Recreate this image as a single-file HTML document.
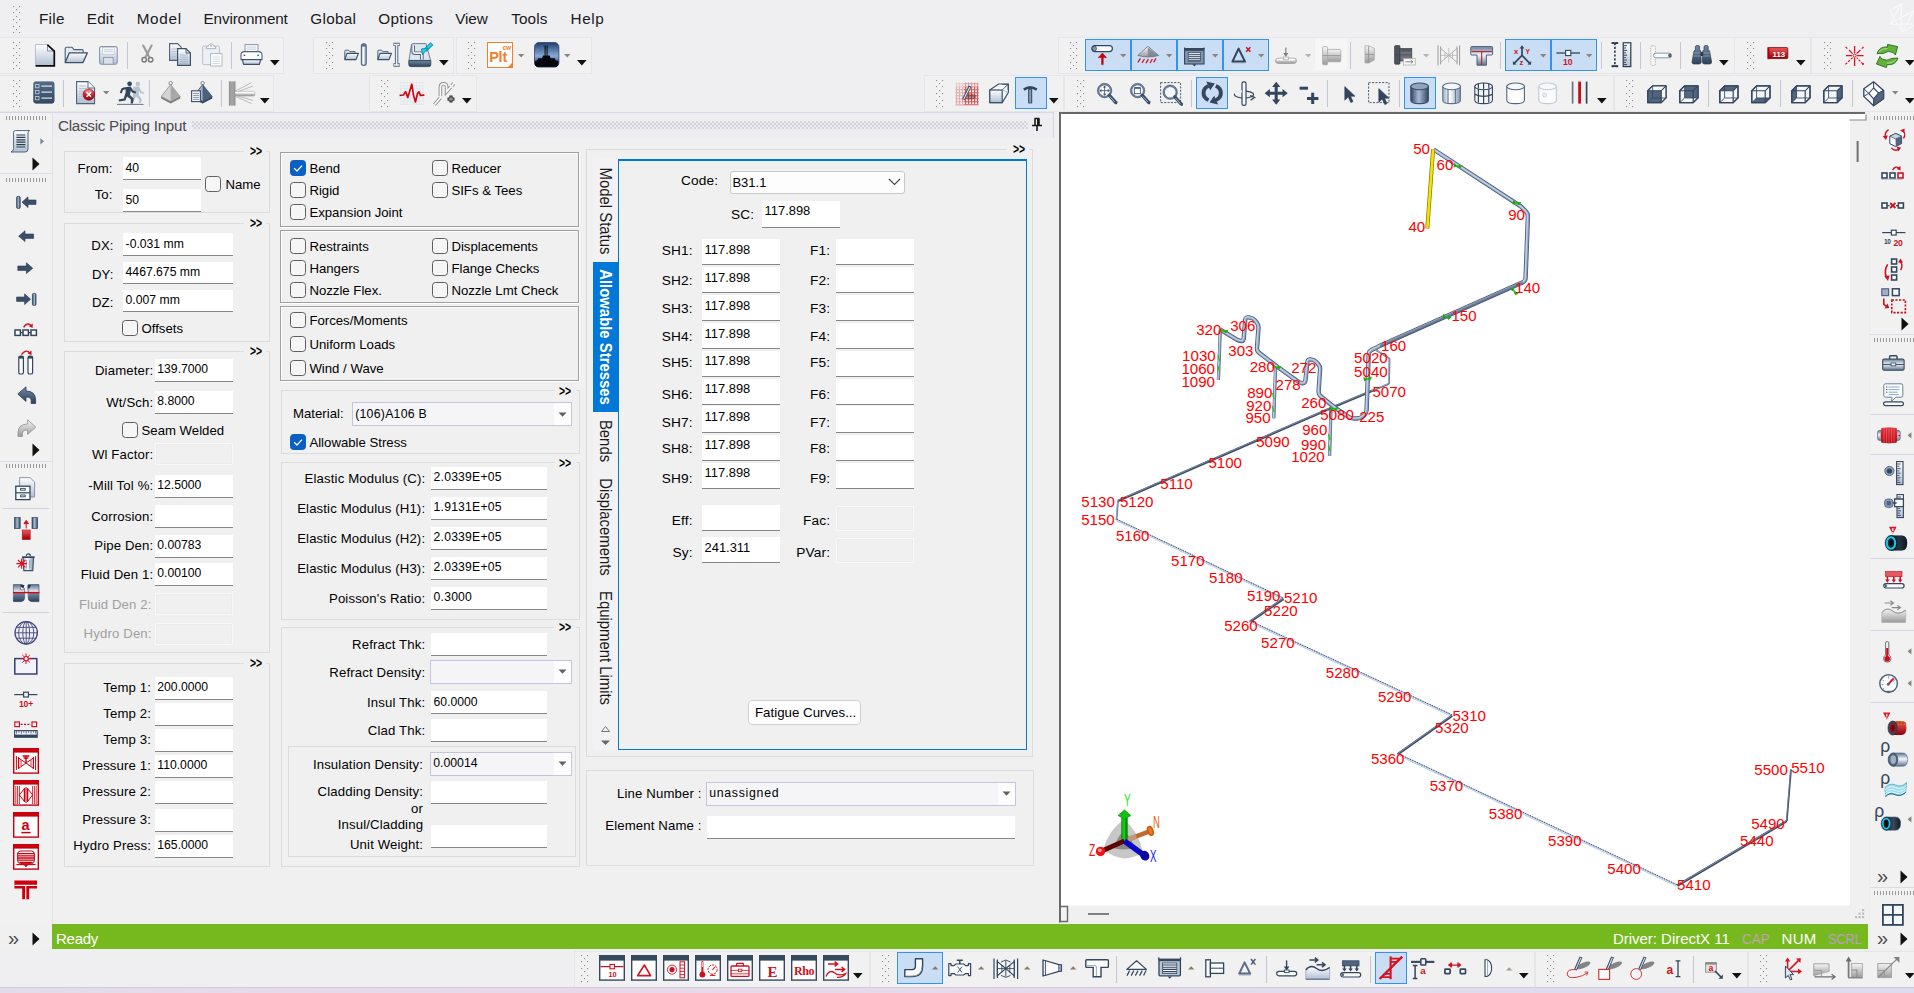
<!DOCTYPE html>
<html lang="en"><head><meta charset="utf-8"><title>Classic Piping Input</title>
<style>
html,body{margin:0;padding:0}
body{width:1914px;height:993px;overflow:hidden;background:#f0f0f0;position:relative;font-family:"Liberation Sans",sans-serif}
div,svg{position:absolute;box-sizing:border-box}
svg{overflow:visible}
.t{white-space:nowrap;line-height:1;font-size:13.2px;color:#000}
.in{background:#fff;border-bottom:1px solid #868686}
.di{background:#f0f0f0;border:1px solid #f8f8f8;box-shadow:inset 0 0 0 1px #ececec}
.co{background:#f5f5f7;border:1px solid #c3c6dc}
.cb{background:#f6f6f6;border:1px solid #5f5f5f;border-radius:3.5px}
.ck{background:#0a5fc2;border-color:#0a5fc2}
.gb{border:1px solid #dcdcdc}
.eb{border:1px solid #a0a0a0;box-shadow:1px 1px 0 #fff, inset 1px 1px 0 #fff}
.hgrip{background:repeating-linear-gradient(90deg,#9a9a9a 0 1px,transparent 1px 3px)}
.dots{background:radial-gradient(circle at 1px 1px,#c6c6ce 0.6px,transparent 0.95px) 0 0/4px 4px,radial-gradient(circle at 1px 1px,#c6c6ce 0.6px,transparent 0.95px) 2px 2px/4px 4px}
</style></head>
<body>
<div style="left:0px;top:0px;width:1914px;height:112px;background:#efeff2"></div>
<div style="left:0px;top:949px;width:1914px;height:38px;background:#efeff2"></div>
<svg style="left:1886px;top:0px" width="28" height="36" viewBox="0 0 28 36"><path d="M3.8 10.6 L15.3 3.8 V31.5 M3.8 10.6 L9.3 20.7 L16.1 31.7 L28 25.4 M3.8 24.1 H27 M3.8 24.1 L9.3 20.7 L28 10.6 M15.3 3.8 L3.8 24.1 M16.1 31.7 L28 10.6" fill="none" stroke="#f9f9fa" stroke-width="1.1" stroke-linejoin="round"/></svg>
<svg style="left:13px;top:6px" width="8" height="27" viewBox="0 0 8 27"><g fill="#8e8e8e"><rect x="0" y="0" width="1.1" height="1.1"/><rect x="6" y="0" width="1.1" height="1.1"/><rect x="3" y="3" width="1.1" height="1.1"/><rect x="0" y="6" width="1.1" height="1.1"/><rect x="6" y="6" width="1.1" height="1.1"/><rect x="3" y="10" width="1.1" height="1.1"/><rect x="0" y="13" width="1.1" height="1.1"/><rect x="6" y="13" width="1.1" height="1.1"/><rect x="3" y="16" width="1.1" height="1.1"/><rect x="0" y="20" width="1.1" height="1.1"/><rect x="6" y="20" width="1.1" height="1.1"/><rect x="3" y="23" width="1.1" height="1.1"/><rect x="0" y="26" width="1.1" height="1.1"/><rect x="6" y="26" width="1.1" height="1.1"/></g></svg>
<div class="t" style="top:11.05px;left:39px;font-size:15.3px;color:#1a1a1a;letter-spacing:0.27px">File</div>
<div class="t" style="top:11.05px;left:86.8px;font-size:15.3px;color:#1a1a1a;letter-spacing:0.17px">Edit</div>
<div class="t" style="top:11.05px;left:136.7px;font-size:15.3px;color:#1a1a1a;letter-spacing:0.67px">Model</div>
<div class="t" style="top:11.05px;left:203.5px;font-size:15.3px;color:#1a1a1a;letter-spacing:-0.15px">Environment</div>
<div class="t" style="top:11.05px;left:310.3px;font-size:15.3px;color:#1a1a1a;letter-spacing:0.3px">Global</div>
<div class="t" style="top:11.05px;left:378.2px;font-size:15.3px;color:#1a1a1a;letter-spacing:0.32px">Options</div>
<div class="t" style="top:11.05px;left:455.2px;font-size:15.3px;color:#1a1a1a;letter-spacing:-0.1px">View</div>
<div class="t" style="top:11.05px;left:511.2px;font-size:15.3px;color:#1a1a1a;letter-spacing:0.1px">Tools</div>
<div class="t" style="top:11.05px;left:570.6px;font-size:15.3px;color:#1a1a1a;letter-spacing:0.6px">Help</div>
<div style="left:-1px;top:36.5px;width:285px;height:37px;background:#f1f1f2;border:1px solid #e5e5ea"></div>
<div style="left:313px;top:36.5px;width:140.5px;height:37px;background:#f1f1f2;border:1px solid #e5e5ea"></div>
<div style="left:455.5px;top:36.5px;width:136px;height:37px;background:#f1f1f2;border:1px solid #e5e5ea"></div>
<div style="left:1057.5px;top:36.5px;width:677px;height:37px;background:#f1f1f2;border:1px solid #e5e5ea"></div>
<div style="left:1734px;top:36.5px;width:77px;height:37px;background:#f1f1f2;border:1px solid #e5e5ea"></div>
<div style="left:1811px;top:36.5px;width:110px;height:37px;background:#f1f1f2;border:1px solid #e5e5ea"></div>
<div style="left:-1px;top:74.5px;width:275px;height:37px;background:#f1f1f2;border:1px solid #e5e5ea"></div>
<div style="left:369px;top:74.5px;width:107.5px;height:37px;background:#f1f1f2;border:1px solid #e5e5ea"></div>
<div style="left:923.5px;top:74.5px;width:140px;height:37px;background:#f1f1f2;border:1px solid #e5e5ea"></div>
<div style="left:1064px;top:74.5px;width:550px;height:37px;background:#f1f1f2;border:1px solid #e5e5ea"></div>
<div style="left:1614px;top:74.5px;width:310px;height:37px;background:#f1f1f2;border:1px solid #e5e5ea"></div>
<svg style="left:13px;top:42px" width="8" height="27" viewBox="0 0 8 27"><g fill="#8e8e8e"><rect x="0" y="0" width="1.1" height="1.1"/><rect x="6" y="0" width="1.1" height="1.1"/><rect x="3" y="3" width="1.1" height="1.1"/><rect x="0" y="6" width="1.1" height="1.1"/><rect x="6" y="6" width="1.1" height="1.1"/><rect x="3" y="10" width="1.1" height="1.1"/><rect x="0" y="13" width="1.1" height="1.1"/><rect x="6" y="13" width="1.1" height="1.1"/><rect x="3" y="16" width="1.1" height="1.1"/><rect x="0" y="20" width="1.1" height="1.1"/><rect x="6" y="20" width="1.1" height="1.1"/><rect x="3" y="23" width="1.1" height="1.1"/><rect x="0" y="26" width="1.1" height="1.1"/><rect x="6" y="26" width="1.1" height="1.1"/></g></svg>
<svg style="left:326px;top:42px" width="8" height="27" viewBox="0 0 8 27"><g fill="#8e8e8e"><rect x="0" y="0" width="1.1" height="1.1"/><rect x="6" y="0" width="1.1" height="1.1"/><rect x="3" y="3" width="1.1" height="1.1"/><rect x="0" y="6" width="1.1" height="1.1"/><rect x="6" y="6" width="1.1" height="1.1"/><rect x="3" y="10" width="1.1" height="1.1"/><rect x="0" y="13" width="1.1" height="1.1"/><rect x="6" y="13" width="1.1" height="1.1"/><rect x="3" y="16" width="1.1" height="1.1"/><rect x="0" y="20" width="1.1" height="1.1"/><rect x="6" y="20" width="1.1" height="1.1"/><rect x="3" y="23" width="1.1" height="1.1"/><rect x="0" y="26" width="1.1" height="1.1"/><rect x="6" y="26" width="1.1" height="1.1"/></g></svg>
<svg style="left:468px;top:42px" width="8" height="27" viewBox="0 0 8 27"><g fill="#8e8e8e"><rect x="0" y="0" width="1.1" height="1.1"/><rect x="6" y="0" width="1.1" height="1.1"/><rect x="3" y="3" width="1.1" height="1.1"/><rect x="0" y="6" width="1.1" height="1.1"/><rect x="6" y="6" width="1.1" height="1.1"/><rect x="3" y="10" width="1.1" height="1.1"/><rect x="0" y="13" width="1.1" height="1.1"/><rect x="6" y="13" width="1.1" height="1.1"/><rect x="3" y="16" width="1.1" height="1.1"/><rect x="0" y="20" width="1.1" height="1.1"/><rect x="6" y="20" width="1.1" height="1.1"/><rect x="3" y="23" width="1.1" height="1.1"/><rect x="0" y="26" width="1.1" height="1.1"/><rect x="6" y="26" width="1.1" height="1.1"/></g></svg>
<svg style="left:1070px;top:42px" width="8" height="27" viewBox="0 0 8 27"><g fill="#8e8e8e"><rect x="0" y="0" width="1.1" height="1.1"/><rect x="6" y="0" width="1.1" height="1.1"/><rect x="3" y="3" width="1.1" height="1.1"/><rect x="0" y="6" width="1.1" height="1.1"/><rect x="6" y="6" width="1.1" height="1.1"/><rect x="3" y="10" width="1.1" height="1.1"/><rect x="0" y="13" width="1.1" height="1.1"/><rect x="6" y="13" width="1.1" height="1.1"/><rect x="3" y="16" width="1.1" height="1.1"/><rect x="0" y="20" width="1.1" height="1.1"/><rect x="6" y="20" width="1.1" height="1.1"/><rect x="3" y="23" width="1.1" height="1.1"/><rect x="0" y="26" width="1.1" height="1.1"/><rect x="6" y="26" width="1.1" height="1.1"/></g></svg>
<svg style="left:1747px;top:42px" width="8" height="27" viewBox="0 0 8 27"><g fill="#8e8e8e"><rect x="0" y="0" width="1.1" height="1.1"/><rect x="6" y="0" width="1.1" height="1.1"/><rect x="3" y="3" width="1.1" height="1.1"/><rect x="0" y="6" width="1.1" height="1.1"/><rect x="6" y="6" width="1.1" height="1.1"/><rect x="3" y="10" width="1.1" height="1.1"/><rect x="0" y="13" width="1.1" height="1.1"/><rect x="6" y="13" width="1.1" height="1.1"/><rect x="3" y="16" width="1.1" height="1.1"/><rect x="0" y="20" width="1.1" height="1.1"/><rect x="6" y="20" width="1.1" height="1.1"/><rect x="3" y="23" width="1.1" height="1.1"/><rect x="0" y="26" width="1.1" height="1.1"/><rect x="6" y="26" width="1.1" height="1.1"/></g></svg>
<svg style="left:1824px;top:42px" width="8" height="27" viewBox="0 0 8 27"><g fill="#8e8e8e"><rect x="0" y="0" width="1.1" height="1.1"/><rect x="6" y="0" width="1.1" height="1.1"/><rect x="3" y="3" width="1.1" height="1.1"/><rect x="0" y="6" width="1.1" height="1.1"/><rect x="6" y="6" width="1.1" height="1.1"/><rect x="3" y="10" width="1.1" height="1.1"/><rect x="0" y="13" width="1.1" height="1.1"/><rect x="6" y="13" width="1.1" height="1.1"/><rect x="3" y="16" width="1.1" height="1.1"/><rect x="0" y="20" width="1.1" height="1.1"/><rect x="6" y="20" width="1.1" height="1.1"/><rect x="3" y="23" width="1.1" height="1.1"/><rect x="0" y="26" width="1.1" height="1.1"/><rect x="6" y="26" width="1.1" height="1.1"/></g></svg>
<svg style="left:13px;top:80px" width="8" height="27" viewBox="0 0 8 27"><g fill="#8e8e8e"><rect x="0" y="0" width="1.1" height="1.1"/><rect x="6" y="0" width="1.1" height="1.1"/><rect x="3" y="3" width="1.1" height="1.1"/><rect x="0" y="6" width="1.1" height="1.1"/><rect x="6" y="6" width="1.1" height="1.1"/><rect x="3" y="10" width="1.1" height="1.1"/><rect x="0" y="13" width="1.1" height="1.1"/><rect x="6" y="13" width="1.1" height="1.1"/><rect x="3" y="16" width="1.1" height="1.1"/><rect x="0" y="20" width="1.1" height="1.1"/><rect x="6" y="20" width="1.1" height="1.1"/><rect x="3" y="23" width="1.1" height="1.1"/><rect x="0" y="26" width="1.1" height="1.1"/><rect x="6" y="26" width="1.1" height="1.1"/></g></svg>
<svg style="left:381px;top:80px" width="8" height="27" viewBox="0 0 8 27"><g fill="#8e8e8e"><rect x="0" y="0" width="1.1" height="1.1"/><rect x="6" y="0" width="1.1" height="1.1"/><rect x="3" y="3" width="1.1" height="1.1"/><rect x="0" y="6" width="1.1" height="1.1"/><rect x="6" y="6" width="1.1" height="1.1"/><rect x="3" y="10" width="1.1" height="1.1"/><rect x="0" y="13" width="1.1" height="1.1"/><rect x="6" y="13" width="1.1" height="1.1"/><rect x="3" y="16" width="1.1" height="1.1"/><rect x="0" y="20" width="1.1" height="1.1"/><rect x="6" y="20" width="1.1" height="1.1"/><rect x="3" y="23" width="1.1" height="1.1"/><rect x="0" y="26" width="1.1" height="1.1"/><rect x="6" y="26" width="1.1" height="1.1"/></g></svg>
<svg style="left:936px;top:80px" width="8" height="27" viewBox="0 0 8 27"><g fill="#8e8e8e"><rect x="0" y="0" width="1.1" height="1.1"/><rect x="6" y="0" width="1.1" height="1.1"/><rect x="3" y="3" width="1.1" height="1.1"/><rect x="0" y="6" width="1.1" height="1.1"/><rect x="6" y="6" width="1.1" height="1.1"/><rect x="3" y="10" width="1.1" height="1.1"/><rect x="0" y="13" width="1.1" height="1.1"/><rect x="6" y="13" width="1.1" height="1.1"/><rect x="3" y="16" width="1.1" height="1.1"/><rect x="0" y="20" width="1.1" height="1.1"/><rect x="6" y="20" width="1.1" height="1.1"/><rect x="3" y="23" width="1.1" height="1.1"/><rect x="0" y="26" width="1.1" height="1.1"/><rect x="6" y="26" width="1.1" height="1.1"/></g></svg>
<svg style="left:1077px;top:80px" width="8" height="27" viewBox="0 0 8 27"><g fill="#8e8e8e"><rect x="0" y="0" width="1.1" height="1.1"/><rect x="6" y="0" width="1.1" height="1.1"/><rect x="3" y="3" width="1.1" height="1.1"/><rect x="0" y="6" width="1.1" height="1.1"/><rect x="6" y="6" width="1.1" height="1.1"/><rect x="3" y="10" width="1.1" height="1.1"/><rect x="0" y="13" width="1.1" height="1.1"/><rect x="6" y="13" width="1.1" height="1.1"/><rect x="3" y="16" width="1.1" height="1.1"/><rect x="0" y="20" width="1.1" height="1.1"/><rect x="6" y="20" width="1.1" height="1.1"/><rect x="3" y="23" width="1.1" height="1.1"/><rect x="0" y="26" width="1.1" height="1.1"/><rect x="6" y="26" width="1.1" height="1.1"/></g></svg>
<svg style="left:1626px;top:80px" width="8" height="27" viewBox="0 0 8 27"><g fill="#8e8e8e"><rect x="0" y="0" width="1.1" height="1.1"/><rect x="6" y="0" width="1.1" height="1.1"/><rect x="3" y="3" width="1.1" height="1.1"/><rect x="0" y="6" width="1.1" height="1.1"/><rect x="6" y="6" width="1.1" height="1.1"/><rect x="3" y="10" width="1.1" height="1.1"/><rect x="0" y="13" width="1.1" height="1.1"/><rect x="6" y="13" width="1.1" height="1.1"/><rect x="3" y="16" width="1.1" height="1.1"/><rect x="0" y="20" width="1.1" height="1.1"/><rect x="6" y="20" width="1.1" height="1.1"/><rect x="3" y="23" width="1.1" height="1.1"/><rect x="0" y="26" width="1.1" height="1.1"/><rect x="6" y="26" width="1.1" height="1.1"/></g></svg>
<div style="left:0px;top:112px;width:52px;height:812px;background:#f1f1f2"></div>
<div class="hgrip" style="left:6px;top:116.4px;width:41px;height:4px;"></div>
<div style="left:0px;top:173px;width:52px;height:1px;background:#dcdce6"></div>
<div class="hgrip" style="left:6px;top:178px;width:41px;height:4px;"></div>
<div style="left:0px;top:460.5px;width:52px;height:1px;background:#dcdce6"></div>
<div class="hgrip" style="left:6px;top:464.4px;width:41px;height:4px;"></div>
<div style="left:1868.5px;top:112px;width:46px;height:838px;background:#f1f1f2;border-left:1px solid #ebebf0"></div>
<div class="hgrip" style="left:1874px;top:116.4px;width:40px;height:4px;"></div>
<div style="left:1870px;top:333.6px;width:44px;height:1px;background:#dcdce6"></div>
<div class="hgrip" style="left:1874px;top:338px;width:40px;height:4px;"></div>
<div style="left:1870px;top:886.6px;width:44px;height:1px;background:#dcdce6"></div>
<div class="hgrip" style="left:1874px;top:891.2px;width:40px;height:4px;"></div>
<div style="left:52px;top:924px;width:1816px;height:25px;background:#76b91e"></div>
<div class="t" style="top:931.3px;left:56px;font-size:15px;color:#fff;letter-spacing:-0.25px">Ready</div>
<div class="t" style="top:931.3px;left:1613px;font-size:15px;color:#fff;letter-spacing:-0.03px">Driver: DirectX 11</div>
<div class="t" style="top:931.3px;left:1741.6px;font-size:15px;color:#c4a2ae;transform:scaleX(0.9);transform-origin:0 0">CAP</div>
<div class="t" style="top:931.3px;left:1781.6px;font-size:15px;color:#fff;letter-spacing:0.2px">NUM</div>
<div class="t" style="top:931.3px;left:1828.4px;font-size:15px;color:#c09cc4;transform:scaleX(0.845);transform-origin:0 0">SCRL</div>
<div class="t" style="top:927.67px;left:8px;font-size:20px;color:#4c4c4c;">»</div>
<svg style="left:32px;top:931.5px" width="8" height="14" viewBox="0 0 8 14"><path d="M0.5 0.5 V13.5 L7.5 7 Z" fill="#111"/></svg>
<div class="t" style="top:927.67px;left:1877px;font-size:20px;color:#4c4c4c;">»</div>
<svg style="left:1900px;top:931.5px" width="8" height="14" viewBox="0 0 8 14"><path d="M0.5 0.5 V13.5 L7.5 7 Z" fill="#111"/></svg>
<div class="t" style="top:865.67px;left:1877px;font-size:20px;color:#4c4c4c;">»</div>
<svg style="left:1900px;top:869.5px" width="8" height="14" viewBox="0 0 8 14"><path d="M0.5 0.5 V13.5 L7.5 7 Z" fill="#111"/></svg>
<div style="left:574px;top:950.5px;width:295.5px;height:37px;background:#f1f1f2;border:1px solid #e5e5ea"></div>
<div style="left:870px;top:950.5px;width:664.5px;height:37px;background:#f1f1f2;border:1px solid #e5e5ea"></div>
<div style="left:1534.5px;top:950.5px;width:213.5px;height:37px;background:#f1f1f2;border:1px solid #e5e5ea"></div>
<div style="left:1748px;top:950.5px;width:170px;height:37px;background:#f1f1f2;border:1px solid #e5e5ea"></div>
<svg style="left:581px;top:955px" width="8" height="27" viewBox="0 0 8 27"><g fill="#8e8e8e"><rect x="0" y="0" width="1.1" height="1.1"/><rect x="6" y="0" width="1.1" height="1.1"/><rect x="3" y="3" width="1.1" height="1.1"/><rect x="0" y="6" width="1.1" height="1.1"/><rect x="6" y="6" width="1.1" height="1.1"/><rect x="3" y="10" width="1.1" height="1.1"/><rect x="0" y="13" width="1.1" height="1.1"/><rect x="6" y="13" width="1.1" height="1.1"/><rect x="3" y="16" width="1.1" height="1.1"/><rect x="0" y="20" width="1.1" height="1.1"/><rect x="6" y="20" width="1.1" height="1.1"/><rect x="3" y="23" width="1.1" height="1.1"/><rect x="0" y="26" width="1.1" height="1.1"/><rect x="6" y="26" width="1.1" height="1.1"/></g></svg>
<svg style="left:882px;top:955px" width="8" height="27" viewBox="0 0 8 27"><g fill="#8e8e8e"><rect x="0" y="0" width="1.1" height="1.1"/><rect x="6" y="0" width="1.1" height="1.1"/><rect x="3" y="3" width="1.1" height="1.1"/><rect x="0" y="6" width="1.1" height="1.1"/><rect x="6" y="6" width="1.1" height="1.1"/><rect x="3" y="10" width="1.1" height="1.1"/><rect x="0" y="13" width="1.1" height="1.1"/><rect x="6" y="13" width="1.1" height="1.1"/><rect x="3" y="16" width="1.1" height="1.1"/><rect x="0" y="20" width="1.1" height="1.1"/><rect x="6" y="20" width="1.1" height="1.1"/><rect x="3" y="23" width="1.1" height="1.1"/><rect x="0" y="26" width="1.1" height="1.1"/><rect x="6" y="26" width="1.1" height="1.1"/></g></svg>
<svg style="left:1547px;top:955px" width="8" height="27" viewBox="0 0 8 27"><g fill="#8e8e8e"><rect x="0" y="0" width="1.1" height="1.1"/><rect x="6" y="0" width="1.1" height="1.1"/><rect x="3" y="3" width="1.1" height="1.1"/><rect x="0" y="6" width="1.1" height="1.1"/><rect x="6" y="6" width="1.1" height="1.1"/><rect x="3" y="10" width="1.1" height="1.1"/><rect x="0" y="13" width="1.1" height="1.1"/><rect x="6" y="13" width="1.1" height="1.1"/><rect x="3" y="16" width="1.1" height="1.1"/><rect x="0" y="20" width="1.1" height="1.1"/><rect x="6" y="20" width="1.1" height="1.1"/><rect x="3" y="23" width="1.1" height="1.1"/><rect x="0" y="26" width="1.1" height="1.1"/><rect x="6" y="26" width="1.1" height="1.1"/></g></svg>
<svg style="left:1760px;top:955px" width="8" height="27" viewBox="0 0 8 27"><g fill="#8e8e8e"><rect x="0" y="0" width="1.1" height="1.1"/><rect x="6" y="0" width="1.1" height="1.1"/><rect x="3" y="3" width="1.1" height="1.1"/><rect x="0" y="6" width="1.1" height="1.1"/><rect x="6" y="6" width="1.1" height="1.1"/><rect x="3" y="10" width="1.1" height="1.1"/><rect x="0" y="13" width="1.1" height="1.1"/><rect x="6" y="13" width="1.1" height="1.1"/><rect x="3" y="16" width="1.1" height="1.1"/><rect x="0" y="20" width="1.1" height="1.1"/><rect x="6" y="20" width="1.1" height="1.1"/><rect x="3" y="23" width="1.1" height="1.1"/><rect x="0" y="26" width="1.1" height="1.1"/><rect x="6" y="26" width="1.1" height="1.1"/></g></svg>
<div style="left:0px;top:986.6px;width:1914px;height:7px;background:linear-gradient(90deg,#e4dcea,#e8d8ea 35%,#e2dcec 70%,#dcdcee);border-top:1px solid #cfccd8"></div>
<div style="left:0px;top:112px;width:1054px;height:1px;background:#d6d6e6"></div>
<div style="left:52px;top:112px;width:1px;height:812px;background:#e2e2ea"></div>
<div style="left:53px;top:113px;width:1001px;height:25px;background:#eeeef2;border-right:1px solid #d6d6e6"></div>
<div class="t" style="top:118.13px;left:58px;font-size:15.2px;color:#4a4a4a;letter-spacing:-0.26px">Classic Piping Input</div>
<div class="dots" style="left:192px;top:121px;width:836px;height:8px;"></div>
<svg style="left:1031px;top:117px" width="12" height="15" viewBox="0 0 12 15"><path d="M3.5 1.5 H8.5 M4 1.5 V8 M8 1.5 V8.5 M1 8.5 H11 M6 9 V14" stroke="#1a1a1a" stroke-width="1.6" fill="none"/><path d="M7 2 V8" stroke="#1a1a1a" stroke-width="2"/></svg>
<div class="gb" style="left:64px;top:150.5px;width:206px;height:62px;"></div>
<div style="left:244px;top:145.5px;width:22px;height:10px;background:#f0f0f0"></div>
<div class="t" style="top:144.15px;left:249.6px;font-size:14px;color:#000;font-weight:bold;transform:scaleX(0.74);transform-origin:0 0">&gt;&gt;</div>
<div class="t" style="top:162.13px;right:1801.4px;letter-spacing:0.13px;">From:</div>
<div class="in" style="left:123px;top:157px;width:78px;height:22.5px;"></div>
<div class="t" style="top:161.67px;left:125.6px;font-size:12.2px;">40</div>
<div class="t" style="top:188.13px;right:1801.4px;letter-spacing:0.13px;">To:</div>
<div class="in" style="left:123px;top:189px;width:78px;height:22.5px;"></div>
<div class="t" style="top:193.67px;left:125.6px;font-size:12.2px;">50</div>
<div class="cb" style="left:205.4px;top:175.8px;width:16px;height:16px;"></div>
<div class="t" style="top:177.83px;left:225.5px;">Name</div>
<div class="gb" style="left:64px;top:222.5px;width:206px;height:119.5px;"></div>
<div style="left:244px;top:217.5px;width:22px;height:10px;background:#f0f0f0"></div>
<div class="t" style="top:216.15px;left:249.6px;font-size:14px;color:#000;font-weight:bold;transform:scaleX(0.74);transform-origin:0 0">&gt;&gt;</div>
<div class="t" style="top:239.33px;right:1800.4px;letter-spacing:0.13px;">DX:</div>
<div class="in" style="left:123px;top:233px;width:110px;height:22.5px;"></div>
<div class="t" style="top:237.67px;left:125.6px;font-size:12.2px;">-0.031 mm</div>
<div class="t" style="top:267.83px;right:1800.4px;letter-spacing:0.13px;">DY:</div>
<div class="in" style="left:123px;top:261.5px;width:110px;height:22.5px;"></div>
<div class="t" style="top:266.17px;left:125.6px;font-size:12.2px;">4467.675 mm</div>
<div class="t" style="top:295.83px;right:1800.4px;letter-spacing:0.13px;">DZ:</div>
<div class="in" style="left:123px;top:289.5px;width:110px;height:22.5px;"></div>
<div class="t" style="top:294.17px;left:125.6px;font-size:12.2px;">0.007 mm</div>
<div class="cb" style="left:122px;top:320px;width:16px;height:16px;"></div>
<div class="t" style="top:322.03px;left:141.5px;">Offsets</div>
<div class="gb" style="left:64px;top:350.5px;width:206px;height:302px;"></div>
<div style="left:244px;top:345.5px;width:22px;height:10px;background:#f0f0f0"></div>
<div class="t" style="top:344.15px;left:249.6px;font-size:14px;color:#000;font-weight:bold;transform:scaleX(0.74);transform-origin:0 0">&gt;&gt;</div>
<div class="t" style="top:363.53px;right:1760.7px;letter-spacing:0.13px;">Diameter:</div>
<div class="in" style="left:154.7px;top:358.7px;width:78.5px;height:23px;"></div>
<div class="t" style="top:363.37px;left:157.3px;font-size:12.2px;">139.7000</div>
<div class="t" style="top:395.53px;right:1760.7px;letter-spacing:0.13px;">Wt/Sch:</div>
<div class="in" style="left:154.7px;top:390.7px;width:78.5px;height:23px;"></div>
<div class="t" style="top:395.37px;left:157.3px;font-size:12.2px;">8.8000</div>
<div class="t" style="top:447.83px;right:1760.7px;letter-spacing:0.13px;">Wl Factor:</div>
<div class="di" style="left:154.7px;top:443px;width:78.5px;height:22px;"></div>
<div class="t" style="top:479.33px;right:1760.7px;letter-spacing:0.13px;">-Mill Tol %:</div>
<div class="in" style="left:154.7px;top:474.5px;width:78.5px;height:23px;"></div>
<div class="t" style="top:479.17px;left:157.3px;font-size:12.2px;">12.5000</div>
<div class="t" style="top:509.53px;right:1760.7px;letter-spacing:0.13px;">Corrosion:</div>
<div class="in" style="left:154.7px;top:504.7px;width:78.5px;height:23px;"></div>
<div class="t" style="top:539.43px;right:1760.7px;letter-spacing:0.13px;">Pipe Den:</div>
<div class="in" style="left:154.7px;top:534.6px;width:78.5px;height:23px;"></div>
<div class="t" style="top:539.27px;left:157.3px;font-size:12.2px;">0.00783</div>
<div class="t" style="top:567.63px;right:1760.7px;letter-spacing:0.13px;">Fluid Den 1:</div>
<div class="in" style="left:154.7px;top:562.8px;width:78.5px;height:23px;"></div>
<div class="t" style="top:567.47px;left:157.3px;font-size:12.2px;">0.00100</div>
<div class="t" style="top:597.83px;right:1762.4px;color:#a0a0a0;letter-spacing:0.13px;">Fluid Den 2:</div>
<div class="di" style="left:154.7px;top:593px;width:78.5px;height:22px;"></div>
<div class="t" style="top:627.43px;right:1762.4px;color:#a0a0a0;letter-spacing:0.13px;">Hydro Den:</div>
<div class="di" style="left:154.7px;top:622.6px;width:78.5px;height:22px;"></div>
<div class="cb" style="left:122px;top:422px;width:16px;height:16px;"></div>
<div class="t" style="top:424.03px;left:141.5px;">Seam Welded</div>
<div class="gb" style="left:64px;top:662.5px;width:206px;height:204px;"></div>
<div style="left:244px;top:657.5px;width:22px;height:10px;background:#f0f0f0"></div>
<div class="t" style="top:656.15px;left:249.6px;font-size:14px;color:#000;font-weight:bold;transform:scaleX(0.74);transform-origin:0 0">&gt;&gt;</div>
<div class="t" style="top:680.93px;right:1762.9px;letter-spacing:0.13px;">Temp 1:</div>
<div class="in" style="left:154.7px;top:676.6px;width:78.5px;height:23px;"></div>
<div class="t" style="top:681.27px;left:157.3px;font-size:12.2px;">200.0000</div>
<div class="t" style="top:706.93px;right:1762.9px;letter-spacing:0.13px;">Temp 2:</div>
<div class="in" style="left:154.7px;top:702.6px;width:78.5px;height:23px;"></div>
<div class="t" style="top:732.83px;right:1762.9px;letter-spacing:0.13px;">Temp 3:</div>
<div class="in" style="left:154.7px;top:728.5px;width:78.5px;height:23px;"></div>
<div class="t" style="top:758.93px;right:1762.9px;letter-spacing:0.13px;">Pressure 1:</div>
<div class="in" style="left:154.7px;top:754.6px;width:78.5px;height:23px;"></div>
<div class="t" style="top:759.27px;left:157.3px;font-size:12.2px;">110.0000</div>
<div class="t" style="top:784.83px;right:1762.9px;letter-spacing:0.13px;">Pressure 2:</div>
<div class="in" style="left:154.7px;top:780.5px;width:78.5px;height:23px;"></div>
<div class="t" style="top:812.83px;right:1762.9px;letter-spacing:0.13px;">Pressure 3:</div>
<div class="in" style="left:154.7px;top:808.5px;width:78.5px;height:23px;"></div>
<div class="t" style="top:838.83px;right:1762.9px;letter-spacing:0.13px;">Hydro Press:</div>
<div class="in" style="left:154.7px;top:834.5px;width:78.5px;height:23px;"></div>
<div class="t" style="top:839.17px;left:157.3px;font-size:12.2px;">165.0000</div>
<div class="eb" style="left:280.3px;top:152.3px;width:299px;height:74.5px;"></div>
<div class="cb ck" style="left:290px;top:160px;width:16px;height:16px;"><svg width="16" height="16" viewBox="0 0 16 16" style="left:-1px;top:-1px"><path d="M4.2 8.3 L7 11 L12 5.6" fill="none" stroke="#fff" stroke-width="1.3"/></svg></div>
<div class="t" style="top:162.03px;left:309.4px;">Bend</div>
<div class="cb" style="left:432px;top:160px;width:16px;height:16px;"></div>
<div class="t" style="top:162.03px;left:451.4px;">Reducer</div>
<div class="cb" style="left:290px;top:182px;width:16px;height:16px;"></div>
<div class="t" style="top:184.03px;left:309.4px;">Rigid</div>
<div class="cb" style="left:432px;top:182px;width:16px;height:16px;"></div>
<div class="t" style="top:184.03px;left:451.4px;">SIFs &amp; Tees</div>
<div class="cb" style="left:290px;top:204px;width:16px;height:16px;"></div>
<div class="t" style="top:206.03px;left:309.4px;">Expansion Joint</div>
<div class="eb" style="left:280.3px;top:230.4px;width:299px;height:72.2px;"></div>
<div class="cb" style="left:290px;top:238px;width:16px;height:16px;"></div>
<div class="t" style="top:240.03px;left:309.4px;">Restraints</div>
<div class="cb" style="left:432px;top:238px;width:16px;height:16px;"></div>
<div class="t" style="top:240.03px;left:451.4px;">Displacements</div>
<div class="cb" style="left:290px;top:260px;width:16px;height:16px;"></div>
<div class="t" style="top:262.03px;left:309.4px;">Hangers</div>
<div class="cb" style="left:432px;top:260px;width:16px;height:16px;"></div>
<div class="t" style="top:262.03px;left:451.4px;">Flange Checks</div>
<div class="cb" style="left:290px;top:282px;width:16px;height:16px;"></div>
<div class="t" style="top:284.03px;left:309.4px;">Nozzle Flex.</div>
<div class="cb" style="left:432px;top:282px;width:16px;height:16px;"></div>
<div class="t" style="top:284.03px;left:451.4px;">Nozzle Lmt Check</div>
<div class="eb" style="left:280.3px;top:306.4px;width:299px;height:74.4px;"></div>
<div class="cb" style="left:290px;top:312.3px;width:16px;height:16px;"></div>
<div class="t" style="top:314.33px;left:309.4px;">Forces/Moments</div>
<div class="cb" style="left:290px;top:336.3px;width:16px;height:16px;"></div>
<div class="t" style="top:338.33px;left:309.4px;">Uniform Loads</div>
<div class="cb" style="left:290px;top:360.3px;width:16px;height:16px;"></div>
<div class="t" style="top:362.33px;left:309.4px;">Wind / Wave</div>
<div class="gb" style="left:280.5px;top:390.4px;width:299.3px;height:64px;"></div>
<div style="left:553.8px;top:385.4px;width:22px;height:10px;background:#f0f0f0"></div>
<div class="t" style="top:384.05px;left:559.4px;font-size:14px;color:#000;font-weight:bold;transform:scaleX(0.74);transform-origin:0 0">&gt;&gt;</div>
<div class="t" style="top:407.33px;left:293px;">Material:</div>
<div class="co" style="left:352px;top:402px;width:220px;height:24px;"></div>
<div style="left:554px;top:403px;width:17px;height:22px;background:#fdfdfd"></div>
<svg style="left:558px;top:411.5px" width="9" height="5" viewBox="0 0 9 5"><path d="M0.5 0.5 H8.5 L4.5 4.8 Z" fill="#606060"/></svg>
<div class="t" style="top:407.59px;left:355.2px;font-size:12.3px;letter-spacing:0.25px">(106)A106 B</div>
<div class="cb ck" style="left:290px;top:434px;width:16px;height:16px;"><svg width="16" height="16" viewBox="0 0 16 16" style="left:-1px;top:-1px"><path d="M4.2 8.3 L7 11 L12 5.6" fill="none" stroke="#fff" stroke-width="1.3"/></svg></div>
<div class="t" style="top:436.03px;left:309.4px;">Allowable Stress</div>
<div class="gb" style="left:280.5px;top:462.3px;width:299.3px;height:158.2px;"></div>
<div style="left:553.8px;top:457.3px;width:22px;height:10px;background:#f0f0f0"></div>
<div class="t" style="top:455.95px;left:559.4px;font-size:14px;color:#000;font-weight:bold;transform:scaleX(0.74);transform-origin:0 0">&gt;&gt;</div>
<div class="t" style="top:471.73px;right:1488.8px;letter-spacing:0.13px;">Elastic Modulus (C):</div>
<div class="in" style="left:431px;top:466.6px;width:116px;height:23px;"></div>
<div class="t" style="top:471.27px;left:433.6px;font-size:12.2px;letter-spacing:0.2px">2.0339E+05</div>
<div class="t" style="top:501.73px;right:1488.8px;letter-spacing:0.13px;">Elastic Modulus (H1):</div>
<div class="in" style="left:431px;top:496.6px;width:116px;height:23px;"></div>
<div class="t" style="top:501.27px;left:433.6px;font-size:12.2px;letter-spacing:0.2px">1.9131E+05</div>
<div class="t" style="top:531.73px;right:1488.8px;letter-spacing:0.13px;">Elastic Modulus (H2):</div>
<div class="in" style="left:431px;top:526.6px;width:116px;height:23px;"></div>
<div class="t" style="top:531.27px;left:433.6px;font-size:12.2px;letter-spacing:0.2px">2.0339E+05</div>
<div class="t" style="top:561.73px;right:1488.8px;letter-spacing:0.13px;">Elastic Modulus (H3):</div>
<div class="in" style="left:431px;top:556.6px;width:116px;height:23px;"></div>
<div class="t" style="top:561.27px;left:433.6px;font-size:12.2px;letter-spacing:0.2px">2.0339E+05</div>
<div class="t" style="top:591.73px;right:1488.8px;letter-spacing:0.13px;">Poisson's Ratio:</div>
<div class="in" style="left:431px;top:586.6px;width:116px;height:23px;"></div>
<div class="t" style="top:591.27px;left:433.6px;font-size:12.2px;letter-spacing:0.2px">0.3000</div>
<div class="gb" style="left:280.5px;top:626.6px;width:299.3px;height:240px;"></div>
<div style="left:553.8px;top:621.6px;width:22px;height:10px;background:#f0f0f0"></div>
<div class="t" style="top:620.25px;left:559.4px;font-size:14px;color:#000;font-weight:bold;transform:scaleX(0.74);transform-origin:0 0">&gt;&gt;</div>
<div class="t" style="top:638.13px;right:1488.8px;letter-spacing:0.13px;">Refract Thk:</div>
<div class="in" style="left:431px;top:632.8px;width:116px;height:23px;"></div>
<div class="t" style="top:666.13px;right:1488.8px;letter-spacing:0.13px;">Refract Density:</div>
<div class="co" style="left:430px;top:660px;width:142px;height:23.5px;"></div>
<div style="left:554px;top:661px;width:17px;height:21.5px;background:#fdfdfd"></div>
<svg style="left:558px;top:669.25px" width="9" height="5" viewBox="0 0 9 5"><path d="M0.5 0.5 H8.5 L4.5 4.8 Z" fill="#606060"/></svg>
<div class="t" style="top:696.13px;right:1488.8px;letter-spacing:0.13px;">Insul Thk:</div>
<div class="in" style="left:431px;top:691px;width:116px;height:23px;"></div>
<div class="t" style="top:695.67px;left:433.6px;font-size:12.2px;">60.0000</div>
<div class="t" style="top:724.13px;right:1488.8px;letter-spacing:0.13px;">Clad Thk:</div>
<div class="in" style="left:431px;top:718.7px;width:116px;height:23px;"></div>
<div class="gb" style="left:288.3px;top:746.4px;width:287.5px;height:110.2px;"></div>
<div class="t" style="top:757.63px;right:1490.9px;letter-spacing:0.13px;">Insulation Density:</div>
<div class="co" style="left:430px;top:752px;width:142px;height:23.7px;"></div>
<div style="left:554px;top:753px;width:17px;height:21.7px;background:#fdfdfd"></div>
<svg style="left:558px;top:761.35px" width="9" height="5" viewBox="0 0 9 5"><path d="M0.5 0.5 H8.5 L4.5 4.8 Z" fill="#606060"/></svg>
<div class="t" style="top:757.29px;left:433.2px;font-size:12.3px;">0.00014</div>
<div class="t" style="top:785.33px;right:1490.9px;letter-spacing:0.13px;">Cladding Density:</div>
<div class="in" style="left:431px;top:781px;width:116px;height:23px;"></div>
<div class="t" style="top:801.63px;right:1490.9px;letter-spacing:0.13px;">or</div>
<div class="t" style="top:817.53px;right:1490.9px;letter-spacing:0.13px;">Insul/Cladding</div>
<div class="t" style="top:837.53px;right:1490.9px;letter-spacing:0.13px;">Unit Weight:</div>
<div class="in" style="left:431px;top:824.7px;width:116px;height:23px;"></div>
<div class="gb" style="left:586.4px;top:148.5px;width:447px;height:608px;"></div>
<div style="left:1007.4px;top:143.5px;width:22px;height:10px;background:#f0f0f0"></div>
<div class="t" style="top:142.15px;left:1013px;font-size:14px;color:#000;font-weight:bold;transform:scaleX(0.74);transform-origin:0 0">&gt;&gt;</div>
<div style="left:593px;top:159px;width:25px;height:103px;background:#f2f2f5"></div>
<div style="left:593px;top:262px;width:25px;height:150px;background:#0078d7"></div>
<div style="left:593px;top:412px;width:25px;height:338px;background:#f2f2f5"></div>
<div class="t" style="left:605.4px;top:210.6px;font-size:17px;color:#1a1a1a;transform:translate(-50%,-50%) rotate(90deg) scaleX(0.875);">Model Status</div>
<div class="t" style="left:605.4px;top:336.8px;font-size:17px;color:#fff;transform:translate(-50%,-50%) rotate(90deg) scaleX(0.875);font-weight:bold;">Allowable Stresses</div>
<div class="t" style="left:605.4px;top:440.6px;font-size:17px;color:#1a1a1a;transform:translate(-50%,-50%) rotate(90deg) scaleX(0.875);">Bends</div>
<div class="t" style="left:605.4px;top:527px;font-size:17px;color:#1a1a1a;transform:translate(-50%,-50%) rotate(90deg) scaleX(0.875);">Displacements</div>
<div class="t" style="left:605.4px;top:647.5px;font-size:17px;color:#1a1a1a;transform:translate(-50%,-50%) rotate(90deg) scaleX(0.875);">Equipment Limits</div>
<svg style="left:600px;top:724px" width="11" height="24" viewBox="0 0 11 24"><path d="M1.5 7.5 L5.5 2.5 L9.5 7.5 Z" fill="none" stroke="#777" stroke-width="1"/><path d="M1 16.5 H10 L5.5 21 Z" fill="#666"/></svg>
<div style="left:618px;top:159px;width:409px;height:591px;border:1px solid #0078d7;border-top-width:2px"></div>
<div class="t" style="top:174.2px;right:1195.8px;font-size:13.7px;letter-spacing:0.13px;">Code:</div>
<div style="left:729.5px;top:171px;width:175px;height:22.5px;background:#fdfdfd;border:1px solid #c9c9c9;border-radius:3px"></div>
<div class="t" style="top:176px;left:732.4px;font-size:13px;">B31.1</div>
<svg style="left:888px;top:178px" width="13" height="8" viewBox="0 0 13 8"><path d="M1 1 L6.5 6.5 L12 1" fill="none" stroke="#444" stroke-width="1.1"/></svg>
<div class="t" style="top:208.2px;right:1159.8px;font-size:13.7px;letter-spacing:0.13px;">SC:</div>
<div class="in" style="left:762px;top:201.2px;width:78px;height:26.4px;"></div>
<div class="t" style="top:205.38px;left:764.6px;font-size:12.9px;">117.898</div>
<div class="t" style="top:244.2px;right:1221.4px;font-size:13.7px;letter-spacing:0.13px;">SH1:</div>
<div class="in" style="left:702px;top:239.2px;width:78px;height:26.3px;"></div>
<div class="t" style="top:243.58px;left:704.6px;font-size:12.9px;">117.898</div>
<div class="t" style="top:244.2px;right:1083.8px;font-size:13.7px;letter-spacing:0.13px;">F1:</div>
<div class="in" style="left:836px;top:239.2px;width:78px;height:26.3px;"></div>
<div class="t" style="top:274.4px;right:1221.4px;font-size:13.7px;letter-spacing:0.13px;">SH2:</div>
<div class="in" style="left:702px;top:267.2px;width:78px;height:26.3px;"></div>
<div class="t" style="top:271.58px;left:704.6px;font-size:12.9px;">117.898</div>
<div class="t" style="top:274.4px;right:1083.8px;font-size:13.7px;letter-spacing:0.13px;">F2:</div>
<div class="in" style="left:836px;top:267.2px;width:78px;height:26.3px;"></div>
<div class="t" style="top:302.4px;right:1221.4px;font-size:13.7px;letter-spacing:0.13px;">SH3:</div>
<div class="in" style="left:702px;top:295.2px;width:78px;height:26.3px;"></div>
<div class="t" style="top:299.58px;left:704.6px;font-size:12.9px;">117.898</div>
<div class="t" style="top:302.4px;right:1083.8px;font-size:13.7px;letter-spacing:0.13px;">F3:</div>
<div class="in" style="left:836px;top:295.2px;width:78px;height:26.3px;"></div>
<div class="t" style="top:330.2px;right:1221.4px;font-size:13.7px;letter-spacing:0.13px;">SH4:</div>
<div class="in" style="left:702px;top:323.2px;width:78px;height:26.3px;"></div>
<div class="t" style="top:327.58px;left:704.6px;font-size:12.9px;">117.898</div>
<div class="t" style="top:330.2px;right:1083.8px;font-size:13.7px;letter-spacing:0.13px;">F4:</div>
<div class="in" style="left:836px;top:323.2px;width:78px;height:26.3px;"></div>
<div class="t" style="top:356.2px;right:1221.4px;font-size:13.7px;letter-spacing:0.13px;">SH5:</div>
<div class="in" style="left:702px;top:350.8px;width:78px;height:26.3px;"></div>
<div class="t" style="top:355.18px;left:704.6px;font-size:12.9px;">117.898</div>
<div class="t" style="top:356.2px;right:1083.8px;font-size:13.7px;letter-spacing:0.13px;">F5:</div>
<div class="in" style="left:836px;top:350.8px;width:78px;height:26.3px;"></div>
<div class="t" style="top:388px;right:1221.4px;font-size:13.7px;letter-spacing:0.13px;">SH6:</div>
<div class="in" style="left:702px;top:378.6px;width:78px;height:26.3px;"></div>
<div class="t" style="top:382.98px;left:704.6px;font-size:12.9px;">117.898</div>
<div class="t" style="top:388px;right:1083.8px;font-size:13.7px;letter-spacing:0.13px;">F6:</div>
<div class="in" style="left:836px;top:378.6px;width:78px;height:26.3px;"></div>
<div class="t" style="top:416.4px;right:1221.4px;font-size:13.7px;letter-spacing:0.13px;">SH7:</div>
<div class="in" style="left:702px;top:406.4px;width:78px;height:26.3px;"></div>
<div class="t" style="top:410.78px;left:704.6px;font-size:12.9px;">117.898</div>
<div class="t" style="top:416.4px;right:1083.8px;font-size:13.7px;letter-spacing:0.13px;">F7:</div>
<div class="in" style="left:836px;top:406.4px;width:78px;height:26.3px;"></div>
<div class="t" style="top:442.2px;right:1221.4px;font-size:13.7px;letter-spacing:0.13px;">SH8:</div>
<div class="in" style="left:702px;top:434.5px;width:78px;height:26.3px;"></div>
<div class="t" style="top:438.88px;left:704.6px;font-size:12.9px;">117.898</div>
<div class="t" style="top:442.2px;right:1083.8px;font-size:13.7px;letter-spacing:0.13px;">F8:</div>
<div class="in" style="left:836px;top:434.5px;width:78px;height:26.3px;"></div>
<div class="t" style="top:472px;right:1221.4px;font-size:13.7px;letter-spacing:0.13px;">SH9:</div>
<div class="in" style="left:702px;top:462.6px;width:78px;height:26.3px;"></div>
<div class="t" style="top:466.98px;left:704.6px;font-size:12.9px;">117.898</div>
<div class="t" style="top:472px;right:1083.8px;font-size:13.7px;letter-spacing:0.13px;">F9:</div>
<div class="in" style="left:836px;top:462.6px;width:78px;height:26.3px;"></div>
<div class="t" style="top:514.2px;right:1221.4px;font-size:13.7px;letter-spacing:0.13px;">Eff:</div>
<div class="in" style="left:702px;top:505px;width:78px;height:26.3px;"></div>
<div class="t" style="top:546.2px;right:1221.4px;font-size:13.7px;letter-spacing:0.13px;">Sy:</div>
<div class="in" style="left:702px;top:537.2px;width:78px;height:26.3px;"></div>
<div class="t" style="top:541.58px;left:704.6px;font-size:12.9px;">241.311</div>
<div class="t" style="top:514.2px;right:1083.8px;font-size:13.7px;letter-spacing:0.13px;">Fac:</div>
<div class="di" style="left:836px;top:505.6px;width:78px;height:25px;"></div>
<div class="t" style="top:546.2px;right:1083.8px;font-size:13.7px;letter-spacing:0.13px;">PVar:</div>
<div class="di" style="left:836px;top:537.7px;width:78px;height:25px;"></div>
<div style="left:748.3px;top:699.5px;width:113.2px;height:25px;background:#fdfdfd;border:1px solid #d0d0d0;border-radius:4px"></div>
<div class="t" style="top:705.74px;left:755px;font-size:13.3px;">Fatigue Curves...</div>
<div class="gb" style="left:586.4px;top:770px;width:447.2px;height:96px;"></div>
<div class="t" style="top:786.83px;right:1212.4px;letter-spacing:0.13px;">Line Number :</div>
<div class="co" style="left:706px;top:782px;width:310px;height:23.5px;"></div>
<div style="left:998px;top:783px;width:17px;height:21.5px;background:#fdfdfd"></div>
<svg style="left:1002px;top:791.25px" width="9" height="5" viewBox="0 0 9 5"><path d="M0.5 0.5 H8.5 L4.5 4.8 Z" fill="#606060"/></svg>
<div class="t" style="top:787.09px;left:709.2px;font-size:12.3px;letter-spacing:0.72px">unassigned</div>
<div class="t" style="top:819.23px;right:1212.4px;letter-spacing:0.13px;">Element Name :</div>
<div class="in" style="left:706.5px;top:816.3px;width:308.5px;height:23px;"></div>
<svg style="left:1059px;top:112px" width="810" height="812" viewBox="0 0 810 812"><rect x="2" y="2" width="789" height="791.5" fill="#fff"/><path d="M1 810.5 V1 H806" fill="none" stroke="#696969" stroke-width="2"/><path d="M790.5 2 H807 V8 H790.5 Z" fill="#fcfcfc"/><path d="M790.5 8 H807 V2.4" fill="none" stroke="#8a8a8a" stroke-width="1.2"/><path d="M798.6 29 V50" stroke="#6e6e6e" stroke-width="2"/><path d="M2 794.5 H8.5 V809.5 H2" fill="#f4f4f4" stroke="#6a6a6a" stroke-width="1.4"/><path d="M29 802 H50" stroke="#808080" stroke-width="2"/><rect x="803" y="797" width="2.2" height="2.2" fill="#bdbdbd"/><rect x="799.5" y="800.5" width="2.2" height="2.2" fill="#bdbdbd"/><rect x="803" y="800.5" width="2.2" height="2.2" fill="#bdbdbd"/><rect x="796" y="804" width="2.2" height="2.2" fill="#bdbdbd"/><rect x="799.5" y="804" width="2.2" height="2.2" fill="#bdbdbd"/><rect x="803" y="804" width="2.2" height="2.2" fill="#bdbdbd"/><path d="M317.3 238.3 L329.7 246 Q330.5 246.5 330.5 247.5 L330 270.7 Q330 271.7 329.1 272.1 L313.5 278.6" fill="none" stroke="#5f7390" stroke-width="1.8" stroke-linejoin="round"/><path d="M317.3 238.3 L329.7 246 Q330.5 246.5 330.5 247.5 L330 270.7 Q330 271.7 329.1 272.1 L313.5 278.6" fill="none" stroke="#b4c4dc" stroke-width="0.63" transform="translate(-0.3 -0.4)"/><path d="M313.5 278.6 L278.9 293.1 Q278 293.5 277.1 293.9 L59 388.8" fill="none" stroke="#3d4c63" stroke-width="2.5" stroke-linejoin="round"/><path d="M313.5 278.6 L278.9 293.1 Q278 293.5 277.1 293.9 L59 388.8" fill="none" stroke="#7f93b0" stroke-width="0.88" transform="translate(-0.3 -0.4)"/><path d="M59 388.8 L57.5 408" fill="none" stroke="#5f7390" stroke-width="1.7" stroke-linejoin="round"/><path d="M59 388.8 L57.5 408" fill="none" stroke="#b4c4dc" stroke-width="0.59" transform="translate(-0.3 -0.4)"/><path d="M57.5 408 L224.4 486.9" fill="none" stroke="#a3badb" stroke-width="2.3"/><path d="M57.5 408 L224.4 486.9" fill="none" stroke="#e9f1fb" stroke-width="0.7" transform="translate(-0.1 0.3)"/><path d="M57.5 408 L224.4 486.9" fill="none" stroke="#3f5068" stroke-width="1" stroke-dasharray="1.3 1.3" transform="translate(0.35 -0.75)"/><path d="M224.4 486.9 L191 509.7" fill="none" stroke="#3d4c63" stroke-width="2.6" stroke-linejoin="round"/><path d="M224.4 486.9 L191 509.7" fill="none" stroke="#7f93b0" stroke-width="0.91" transform="translate(-0.3 -0.4)"/><path d="M191 509.7 L393.1 603.7" fill="none" stroke="#a3badb" stroke-width="2.3"/><path d="M191 509.7 L393.1 603.7" fill="none" stroke="#e9f1fb" stroke-width="0.7" transform="translate(-0.1 0.3)"/><path d="M191 509.7 L393.1 603.7" fill="none" stroke="#3f5068" stroke-width="1" stroke-dasharray="1.3 1.3" transform="translate(0.35 -0.75)"/><path d="M393.1 603.7 L338.7 642.3" fill="none" stroke="#3d4c63" stroke-width="2.6" stroke-linejoin="round"/><path d="M393.1 603.7 L338.7 642.3" fill="none" stroke="#7f93b0" stroke-width="0.91" transform="translate(-0.3 -0.4)"/><path d="M338.7 642.3 L618.3 773.7" fill="none" stroke="#a3badb" stroke-width="2.3"/><path d="M338.7 642.3 L618.3 773.7" fill="none" stroke="#e9f1fb" stroke-width="0.7" transform="translate(-0.1 0.3)"/><path d="M338.7 642.3 L618.3 773.7" fill="none" stroke="#3f5068" stroke-width="1" stroke-dasharray="1.3 1.3" transform="translate(0.35 -0.75)"/><path d="M618.3 773.7 L727.8 709" fill="none" stroke="#3d4c63" stroke-width="2.6" stroke-linejoin="round"/><path d="M618.3 773.7 L727.8 709" fill="none" stroke="#7f93b0" stroke-width="0.91" transform="translate(-0.3 -0.4)"/><path d="M727.8 709 L732 657.4" fill="none" stroke="#3d4c63" stroke-width="1.8" stroke-linejoin="round"/><path d="M727.8 709 L732 657.4" fill="none" stroke="#7f93b0" stroke-width="0.63" transform="translate(-0.3 -0.4)"/><path d="M161.3 217.6 L159.4 268" fill="none" stroke="#4c5d77" stroke-width="3.2" stroke-linejoin="round"/><path d="M161.3 217.6 L159.4 268" fill="none" stroke="#8fa3c0" stroke-width="1.98" stroke-linejoin="round"/><path d="M161.3 217.6 L159.4 268" fill="none" stroke="#c3d2e8" stroke-width="0.96" stroke-linejoin="round" transform="translate(-0.4 -0.4)"/><path d="M216.6 254 L214.8 306.3" fill="none" stroke="#4c5d77" stroke-width="3.2" stroke-linejoin="round"/><path d="M216.6 254 L214.8 306.3" fill="none" stroke="#8fa3c0" stroke-width="1.98" stroke-linejoin="round"/><path d="M216.6 254 L214.8 306.3" fill="none" stroke="#c3d2e8" stroke-width="0.96" stroke-linejoin="round" transform="translate(-0.4 -0.4)"/><path d="M272 296 L270.6 344" fill="none" stroke="#4c5d77" stroke-width="3.2" stroke-linejoin="round"/><path d="M272 296 L270.6 344" fill="none" stroke="#8fa3c0" stroke-width="1.98" stroke-linejoin="round"/><path d="M272 296 L270.6 344" fill="none" stroke="#c3d2e8" stroke-width="0.96" stroke-linejoin="round" transform="translate(-0.4 -0.4)"/><path d="M374.6 37.5 L459.5 92.9 Q462 94.5 464.1 96.6 L466.9 99.4 Q469 101.5 468.9 104.5 L466.6 166 Q466.5 169 463.8 170.2 L323.2 232.8 Q320.5 234 317.8 235.4 L312.5 238 Q309.8 239.4 309.7 242.4 L307.6 298 Q307.5 301 305.2 302.9 L303.3 304.6 Q301 306.5 298 306.5 L295 306.5 Q292 306.5 289.5 304.8 L278.3 297.3 Q275.8 295.6 273.5 293.7 L261.7 284.3 Q259.4 282.4 259.6 279.4 L261.1 257.5 Q261.3 254.5 259.3 252.3 L257.5 250.2 Q255.5 248 252.5 247.6 L251.7 247.5 Q248.7 247.1 248.4 250.1 L246.5 268 Q246.2 271 243.8 271.2 L243.8 271.2 Q241.4 271.4 239 269.6 L219 255.2 Q216.6 253.4 214.2 251.6 L200.2 240.8 Q197.8 239 198 236 L199.5 216 Q199.7 213 197.8 210.7 L195.9 208.3 Q194 206 191 205.6 L189.4 205.4 Q186.4 205 186.2 208 L184.8 226 Q184.6 229 182.3 229 L182.3 229 Q180 229 177.4 227.4 L161.3 217.6" fill="none" stroke="#4c5d77" stroke-width="4.4" stroke-linejoin="round"/><path d="M374.6 37.5 L459.5 92.9 Q462 94.5 464.1 96.6 L466.9 99.4 Q469 101.5 468.9 104.5 L466.6 166 Q466.5 169 463.8 170.2 L323.2 232.8 Q320.5 234 317.8 235.4 L312.5 238 Q309.8 239.4 309.7 242.4 L307.6 298 Q307.5 301 305.2 302.9 L303.3 304.6 Q301 306.5 298 306.5 L295 306.5 Q292 306.5 289.5 304.8 L278.3 297.3 Q275.8 295.6 273.5 293.7 L261.7 284.3 Q259.4 282.4 259.6 279.4 L261.1 257.5 Q261.3 254.5 259.3 252.3 L257.5 250.2 Q255.5 248 252.5 247.6 L251.7 247.5 Q248.7 247.1 248.4 250.1 L246.5 268 Q246.2 271 243.8 271.2 L243.8 271.2 Q241.4 271.4 239 269.6 L219 255.2 Q216.6 253.4 214.2 251.6 L200.2 240.8 Q197.8 239 198 236 L199.5 216 Q199.7 213 197.8 210.7 L195.9 208.3 Q194 206 191 205.6 L189.4 205.4 Q186.4 205 186.2 208 L184.8 226 Q184.6 229 182.3 229 L182.3 229 Q180 229 177.4 227.4 L161.3 217.6" fill="none" stroke="#8fa3c0" stroke-width="2.73" stroke-linejoin="round"/><path d="M374.6 37.5 L459.5 92.9 Q462 94.5 464.1 96.6 L466.9 99.4 Q469 101.5 468.9 104.5 L466.6 166 Q466.5 169 463.8 170.2 L323.2 232.8 Q320.5 234 317.8 235.4 L312.5 238 Q309.8 239.4 309.7 242.4 L307.6 298 Q307.5 301 305.2 302.9 L303.3 304.6 Q301 306.5 298 306.5 L295 306.5 Q292 306.5 289.5 304.8 L278.3 297.3 Q275.8 295.6 273.5 293.7 L261.7 284.3 Q259.4 282.4 259.6 279.4 L261.1 257.5 Q261.3 254.5 259.3 252.3 L257.5 250.2 Q255.5 248 252.5 247.6 L251.7 247.5 Q248.7 247.1 248.4 250.1 L246.5 268 Q246.2 271 243.8 271.2 L243.8 271.2 Q241.4 271.4 239 269.6 L219 255.2 Q216.6 253.4 214.2 251.6 L200.2 240.8 Q197.8 239 198 236 L199.5 216 Q199.7 213 197.8 210.7 L195.9 208.3 Q194 206 191 205.6 L189.4 205.4 Q186.4 205 186.2 208 L184.8 226 Q184.6 229 182.3 229 L182.3 229 Q180 229 177.4 227.4 L161.3 217.6" fill="none" stroke="#c3d2e8" stroke-width="1.32" stroke-linejoin="round" transform="translate(-0.4 -0.4)"/><path d="M463.5 170 L321 233.6" stroke="#34465f" stroke-width="2.8" fill="none" opacity="0.5" transform="translate(0.3 0.5)"/><path d="M368.3 116.5 L374.1 37.3" stroke="#8a7a00" stroke-width="4" fill="none"/><path d="M368.3 116.5 L374.1 37.3" stroke="#f2e400" stroke-width="2.6" fill="none"/><g transform="translate(398 54) rotate(20) scale(0.72)"><path d="M-5 -2 L0 0 L-4 3 M0 0 L6 -3 L5 1 Z" fill="#1e9a10" stroke="#22b814" stroke-width="1.2"/></g><g transform="translate(457 91) rotate(20) scale(0.72)"><path d="M-5 -2 L0 0 L-4 3 M0 0 L6 -3 L5 1 Z" fill="#1e9a10" stroke="#22b814" stroke-width="1.2"/></g><g transform="translate(455 179) rotate(60) scale(0.72)"><path d="M-5 -2 L0 0 L-4 3 M0 0 L6 -3 L5 1 Z" fill="#1e9a10" stroke="#22b814" stroke-width="1.2"/></g><g transform="translate(387 205) rotate(30) scale(0.72)"><path d="M-5 -2 L0 0 L-4 3 M0 0 L6 -3 L5 1 Z" fill="#1e9a10" stroke="#22b814" stroke-width="1.2"/></g><g transform="translate(164 219) rotate(20) scale(0.72)"><path d="M-5 -2 L0 0 L-4 3 M0 0 L6 -3 L5 1 Z" fill="#1e9a10" stroke="#22b814" stroke-width="1.2"/></g><g transform="translate(217 255) rotate(20) scale(0.72)"><path d="M-5 -2 L0 0 L-4 3 M0 0 L6 -3 L5 1 Z" fill="#1e9a10" stroke="#22b814" stroke-width="1.2"/></g><g transform="translate(308 267) rotate(0) scale(0.72)"><path d="M-5 -2 L0 0 L-4 3 M0 0 L6 -3 L5 1 Z" fill="#1e9a10" stroke="#22b814" stroke-width="1.2"/></g><g transform="translate(274 297) rotate(10) scale(0.72)"><path d="M-5 -2 L0 0 L-4 3 M0 0 L6 -3 L5 1 Z" fill="#1e9a10" stroke="#22b814" stroke-width="1.2"/></g><path d="M159 243 L160.5 249" stroke="#22c814" stroke-width="1.3"/><path d="M159 254 L160.5 260" stroke="#22c814" stroke-width="1.3"/><path d="M213.5 281 L215 287" stroke="#22c814" stroke-width="1.3"/><path d="M213.5 294 L215 300" stroke="#22c814" stroke-width="1.3"/><path d="M269.5 322 L271 328" stroke="#22c814" stroke-width="1.3"/><path d="M269.5 333 L271 339" stroke="#22c814" stroke-width="1.3"/><g transform="translate(65.4 728.9)"><path d="M-0.4 -21.4 Q-15 -12 -21.4 9 Q-10 16.4 -0.4 17.6 Q10 16.8 18.6 12 Q14 -10 -0.4 -21.4 Z" fill="#b9b9b9" opacity="0.8"/><path d="M-0.4 -11 Q-7 -4 -11 7.4 Q-2 9.6 10.6 7.4 Q7 -3 -0.4 -11 Z" fill="#7f7f7f" opacity="0.85"/><path d="M0 0 L25 -9.6" stroke="#c46a2c" stroke-width="4.6"/><path d="M0 0 L12 -4.6" stroke="#c29678" stroke-width="4.6"/><ellipse cx="26" cy="-10" rx="2.6" ry="4.6" fill="#e8781e" stroke="#c85a10" stroke-width="1.4" transform="rotate(-20 26 -10)"/><path d="M0.1 0 V-23" stroke="#0a8a0a" stroke-width="6.4"/><path d="M-0.6 0 V-23" stroke="#14c814" stroke-width="3"/><path d="M-6.2 -25.4 L0.1 -31 L6.4 -25.4 L0.1 -21.6 Z" fill="#12c012" stroke="#0c9c0c" stroke-width="0.8"/><path d="M0 0 L-23.6 10.6" stroke="#5c0404" stroke-width="4.8"/><circle cx="-23.9" cy="10.6" r="4.7" fill="#f01414"/><circle cx="-24.6" cy="9.4" r="1.9" fill="#ff9a9a"/><path d="M0 0 L20 14.6" stroke="#0808c4" stroke-width="5.6"/><ellipse cx="20.4" cy="14.8" rx="4.4" ry="5" fill="#0a0aa0" transform="rotate(-30 20.4 14.8)"/></g></svg>
<div class="t n" style="top:140.52px;left:1413.2px;font-size:15.1px;color:#f00;">50</div>
<div class="t n" style="top:156.82px;left:1436.5px;font-size:15.1px;color:#f00;">60</div>
<div class="t n" style="top:206.82px;left:1508.2px;font-size:15.1px;color:#f00;">90</div>
<div class="t n" style="top:218.52px;left:1408.4px;font-size:15.1px;color:#f00;">40</div>
<div class="t n" style="top:280.02px;left:1515px;font-size:15.1px;color:#f00;">140</div>
<div class="t n" style="top:307.72px;left:1451.4px;font-size:15.1px;color:#f00;">150</div>
<div class="t n" style="top:337.52px;left:1381px;font-size:15.1px;color:#f00;">160</div>
<div class="t n" style="top:321.82px;left:1196.2px;font-size:15.1px;color:#f00;">320</div>
<div class="t n" style="top:318.02px;left:1230.2px;font-size:15.1px;color:#f00;">306</div>
<div class="t n" style="top:343.22px;left:1228.3px;font-size:15.1px;color:#f00;">303</div>
<div class="t n" style="top:347.62px;left:1182.1px;font-size:15.1px;color:#f00;">1030</div>
<div class="t n" style="top:360.82px;left:1181.4px;font-size:15.1px;color:#f00;">1060</div>
<div class="t n" style="top:374.02px;left:1181.4px;font-size:15.1px;color:#f00;">1090</div>
<div class="t n" style="top:358.92px;left:1249.7px;font-size:15.1px;color:#f00;">280</div>
<div class="t n" style="top:360.22px;left:1291.2px;font-size:15.1px;color:#f00;">272</div>
<div class="t n" style="top:376.62px;left:1275.5px;font-size:15.1px;color:#f00;">278</div>
<div class="t n" style="top:384.72px;left:1247.2px;font-size:15.1px;color:#f00;">890</div>
<div class="t n" style="top:398.12px;left:1246.2px;font-size:15.1px;color:#f00;">920</div>
<div class="t n" style="top:410.42px;left:1245.4px;font-size:15.1px;color:#f00;">950</div>
<div class="t n" style="top:394.82px;left:1301.2px;font-size:15.1px;color:#f00;">260</div>
<div class="t n" style="top:350.12px;left:1354.1px;font-size:15.1px;color:#f00;">5020</div>
<div class="t n" style="top:363.72px;left:1354.1px;font-size:15.1px;color:#f00;">5040</div>
<div class="t n" style="top:383.92px;left:1372.4px;font-size:15.1px;color:#f00;">5070</div>
<div class="t n" style="top:406.62px;left:1320.3px;font-size:15.1px;color:#f00;">5080</div>
<div class="t n" style="top:409.02px;left:1359.2px;font-size:15.1px;color:#f00;">225</div>
<div class="t n" style="top:422.42px;left:1302.2px;font-size:15.1px;color:#f00;">960</div>
<div class="t n" style="top:436.72px;left:1300.9px;font-size:15.1px;color:#f00;">990</div>
<div class="t n" style="top:448.92px;left:1291.2px;font-size:15.1px;color:#f00;">1020</div>
<div class="t n" style="top:434.02px;left:1256.2px;font-size:15.1px;color:#f00;">5090</div>
<div class="t n" style="top:454.92px;left:1208.4px;font-size:15.1px;color:#f00;">5100</div>
<div class="t n" style="top:475.92px;left:1160.3px;font-size:15.1px;color:#f00;">5110</div>
<div class="t n" style="top:493.52px;left:1081.3px;font-size:15.1px;color:#f00;">5130</div>
<div class="t n" style="top:493.82px;left:1119.9px;font-size:15.1px;color:#f00;">5120</div>
<div class="t n" style="top:511.52px;left:1081.2px;font-size:15.1px;color:#f00;">5150</div>
<div class="t n" style="top:527.62px;left:1115.9px;font-size:15.1px;color:#f00;">5160</div>
<div class="t n" style="top:553.42px;left:1171px;font-size:15.1px;color:#f00;">5170</div>
<div class="t n" style="top:570.32px;left:1209px;font-size:15.1px;color:#f00;">5180</div>
<div class="t n" style="top:588.32px;left:1246.9px;font-size:15.1px;color:#f00;">5190</div>
<div class="t n" style="top:590.42px;left:1283.9px;font-size:15.1px;color:#f00;">5210</div>
<div class="t n" style="top:603.32px;left:1264.1px;font-size:15.1px;color:#f00;">5220</div>
<div class="t n" style="top:617.52px;left:1224.2px;font-size:15.1px;color:#f00;">5260</div>
<div class="t n" style="top:634.92px;left:1261.1px;font-size:15.1px;color:#f00;">5270</div>
<div class="t n" style="top:664.92px;left:1325.8px;font-size:15.1px;color:#f00;">5280</div>
<div class="t n" style="top:689.12px;left:1377.9px;font-size:15.1px;color:#f00;">5290</div>
<div class="t n" style="top:707.82px;left:1452.4px;font-size:15.1px;color:#f00;">5310</div>
<div class="t n" style="top:719.52px;left:1435.1px;font-size:15.1px;color:#f00;">5320</div>
<div class="t n" style="top:750.62px;left:1370.9px;font-size:15.1px;color:#f00;">5360</div>
<div class="t n" style="top:778.12px;left:1429.7px;font-size:15.1px;color:#f00;">5370</div>
<div class="t n" style="top:805.82px;left:1488.8px;font-size:15.1px;color:#f00;">5380</div>
<div class="t n" style="top:833.02px;left:1548px;font-size:15.1px;color:#f00;">5390</div>
<div class="t n" style="top:860.62px;left:1607.3px;font-size:15.1px;color:#f00;">5400</div>
<div class="t n" style="top:876.92px;left:1677px;font-size:15.1px;color:#f00;">5410</div>
<div class="t n" style="top:833.02px;left:1740px;font-size:15.1px;color:#f00;">5440</div>
<div class="t n" style="top:815.62px;left:1751.2px;font-size:15.1px;color:#f00;">5490</div>
<div class="t n" style="top:761.92px;left:1754.3px;font-size:15.1px;color:#f00;">5500</div>
<div class="t n" style="top:760.12px;left:1791.2px;font-size:15.1px;color:#f00;">5510</div>
<div class="t n" style="top:793.15px;left:1123.6px;font-size:16.6px;color:#14e614;transform:scaleX(0.6);transform-origin:0 0">Y</div>
<div class="t n" style="top:815.06px;left:1152.8px;font-size:16px;color:#e06a12;transform:scaleX(0.6);transform-origin:0 0">N</div>
<div class="t n" style="top:841.81px;left:1088.8px;font-size:17px;color:#f01414;transform:scaleX(0.6);transform-origin:0 0">Z</div>
<div class="t n" style="top:849.16px;left:1149.8px;font-size:16px;color:#1414f0;transform:scaleX(0.6);transform-origin:0 0">X</div>
<svg width="0" height="0" style="left:0;top:0"><defs>
<linearGradient id="gp" x1="0" y1="0" x2="0" y2="1"><stop offset="0" stop-color="#fff"/><stop offset="1" stop-color="#b2c0d3"/></linearGradient>
<linearGradient id="gs" x1="0" y1="0" x2="0" y2="1"><stop offset="0" stop-color="#7288a4"/><stop offset="1" stop-color="#2e4158"/></linearGradient>
<linearGradient id="gh" x1="0" y1="0" x2="1" y2="0"><stop offset="0" stop-color="#31455d"/><stop offset="0.45" stop-color="#a9bbd2"/><stop offset="1" stop-color="#31455d"/></linearGradient>
<linearGradient id="gc" x1="0" y1="0" x2="1" y2="0"><stop offset="0" stop-color="#9fb0c6"/><stop offset="0.4" stop-color="#fff"/><stop offset="1" stop-color="#8496ae"/></linearGradient>
<linearGradient id="gv" x1="0" y1="0" x2="0" y2="1"><stop offset="0" stop-color="#5d738f"/><stop offset="0.45" stop-color="#f4f7fb"/><stop offset="1" stop-color="#5d738f"/></linearGradient>
<linearGradient id="gg" x1="0" y1="0" x2="0" y2="1"><stop offset="0" stop-color="#f6f6f6"/><stop offset="1" stop-color="#9a9a9a"/></linearGradient>
<linearGradient id="gr" x1="0" y1="0" x2="0" y2="1"><stop offset="0" stop-color="#f25a5a"/><stop offset="1" stop-color="#8e0008"/></linearGradient>
<linearGradient id="gd" x1="0" y1="0" x2="1" y2="0"><stop offset="0" stop-color="#0e1822"/><stop offset="0.5" stop-color="#3a4a5c"/><stop offset="1" stop-color="#0e1822"/></linearGradient>
<linearGradient id="gsky" x1="0" y1="0" x2="0" y2="1"><stop offset="0" stop-color="#223f6c"/><stop offset="0.55" stop-color="#86a9d6"/><stop offset="0.8" stop-color="#3e5f8e"/><stop offset="1" stop-color="#1b2d48"/></linearGradient>
</defs></svg>
<svg style="left:34.8px;top:44.2px" width="21" height="23" viewBox="0 0 21 23"><path d="M0.5 0.5 H12.5 L19 7 V21.5 H0.5 Z" fill="url(#gp)" stroke="#a7b3c4" stroke-width="0.8"/><path d="M12.5 0.5 V7 H19 Z" fill="#eef2f7" stroke="#5b6b80" stroke-width="0.7"/><path d="M12.5 0.8 L19.3 7.2 V21.8 H0.6" fill="none" stroke="#0c0c10" stroke-width="1.7"/></svg>
<svg style="left:64.4px;top:46px" width="25" height="19" viewBox="0 0 25 19"><path d="M1.2 16 V2.6 Q1.2 1.2 2.6 1.2 H8 L10 3.6 H18.2 Q19.2 3.6 19.2 4.8 V7" fill="#e3e9f0" stroke="#4a607c" stroke-width="1.1"/><path d="M1.2 16.6 L5.4 6.8 H23.4 L19 16.6 Z" fill="url(#gp)" stroke="#3b4f68" stroke-width="1.3" stroke-linejoin="round"/></svg>
<svg style="left:99px;top:46px" width="19" height="19" viewBox="0 0 19 19"><rect x="0.6" y="0.6" width="17.6" height="17.6" rx="1.6" fill="url(#gp)" stroke="#8798ae" stroke-width="1.1"/><rect x="3.6" y="1.4" width="11.6" height="7" fill="#f4f6f9" stroke="#b4bfcd" stroke-width="0.6"/><path d="M5 3.6 H14 M5 5.6 H14" stroke="#c3ccd8" stroke-width="0.8"/><rect x="4.6" y="11.4" width="9.6" height="6.8" fill="#d9e0e9" stroke="#8798ae" stroke-width="0.9"/></svg>
<div style="left:127px;top:42px;width:1px;height:27px;background:#c4c6d8"></div>
<svg style="left:141px;top:45.4px" width="13" height="19" viewBox="0 0 13 19"><path d="M2.2 0.5 L8.2 12 M10.6 0.5 L4.6 12" stroke="#9b9b9b" stroke-width="2.1" stroke-linecap="round"/><circle cx="3.2" cy="14.8" r="2.2" fill="none" stroke="#7c7c7c" stroke-width="1.5"/><circle cx="9.6" cy="14.8" r="2.2" fill="none" stroke="#7c7c7c" stroke-width="1.5"/></svg>
<svg style="left:169px;top:43px" width="23" height="24" viewBox="0 0 23 24"><path d="M0.6 0.6 H8.6 L12.2 4.2 V17.4 H0.6 Z" fill="url(#gp)" stroke="#4d627d" stroke-width="1.1"/><path d="M2.5 6 H10 M2.5 8.5 H10 M2.5 11 H10 M2.5 13.5 H10" stroke="#b4c0d0" stroke-width="0.8"/><path d="M8.6 5.6 H17 L21.4 10 V22.4 H8.6 Z" fill="url(#gp)" stroke="#3b4f68" stroke-width="1.2"/><path d="M17 5.6 V10 H21.4" fill="none" stroke="#3b4f68" stroke-width="0.9"/><path d="M10.8 12 H19 M10.8 14.2 H19 M10.8 16.4 H19 M10.8 18.6 H19 M10.8 20.6 H19" stroke="#9fadc0" stroke-width="0.8"/></svg>
<svg style="left:202px;top:43px" width="21" height="24" viewBox="0 0 21 24"><rect x="0.6" y="3" width="16.8" height="18.6" rx="1.2" fill="#eceff3" stroke="#b7c0cc" stroke-width="1"/><path d="M4 5.6 Q4 3.4 6.4 3.2 Q6.6 0.8 9 0.8 Q11.4 0.8 11.6 3.2 Q14 3.4 14 5.6 Z" fill="#f7f8fa" stroke="#a7b1be" stroke-width="0.9"/><circle cx="9" cy="2.8" r="0.9" fill="#9aa5b4"/><rect x="8.6" y="10.6" width="11.4" height="12.4" fill="#fbfcfd" stroke="#aab4c2" stroke-width="0.9"/><path d="M10.4 14 H18 M10.4 16.2 H18 M10.4 18.4 H18 M10.4 20.6 H18" stroke="#cfd6df" stroke-width="0.8"/></svg>
<div style="left:231px;top:42px;width:1px;height:27px;background:#c4c6d8"></div>
<svg style="left:240px;top:44.2px" width="24" height="22" viewBox="0 0 24 22"><rect x="5" y="0.6" width="13" height="8" fill="#f6f8fb" stroke="#7f90a8" stroke-width="0.9"/><path d="M7 3 H16 M7 5.2 H16" stroke="#c0cad8" stroke-width="0.8"/><path d="M1 11 Q1 7.6 4.4 7.6 H18.6 Q22 7.6 22 11 V15.6 H1 Z" fill="#fbfcfe" stroke="#4d627d" stroke-width="1.1"/><rect x="3.6" y="10.6" width="1.6" height="1.4" fill="#e01818"/><rect x="17.2" y="10.6" width="1.8" height="1.4" fill="#18a838"/><path d="M2.4 15.6 H20.6 L19.4 20.4 H3.6 Z" fill="url(#gp)" stroke="#3b4f68" stroke-width="1.2" stroke-linejoin="round"/></svg>
<svg style="left:269.7px;top:60px" width="10" height="6" viewBox="0 0 10 6"><path d="M0 0 H9.6 L4.8 5.4 Z" fill="#111"/></svg>
<svg style="left:343.6px;top:43.4px" width="24" height="24" viewBox="0 0 24 24"><g transform="translate(0 6.4)"><path d="M0.8 9.8 V1.8 Q0.8 0.8 1.8 0.8 H4.6 L5.8 2.2 H11 V3.6" fill="#e3e9f0" stroke="#4a607c" stroke-width="1"/><path d="M0.8 10.2 L3 4 H14.4 L12 10.2 Z" fill="url(#gp)" stroke="#3b4f68" stroke-width="1.2" stroke-linejoin="round"/></g><rect x="17.4" y="0.8" width="4.8" height="21.6" rx="2.2" fill="url(#gc)" stroke="#4d627d" stroke-width="1.1"/><ellipse cx="19.8" cy="2.4" rx="2.2" ry="1.3" fill="#5b728e"/></svg>
<svg style="left:376.6px;top:43.4px" width="24" height="24" viewBox="0 0 24 24"><g transform="translate(0 6.4)"><path d="M0.8 9.8 V1.8 Q0.8 0.8 1.8 0.8 H4.6 L5.8 2.2 H11 V3.6" fill="#e3e9f0" stroke="#4a607c" stroke-width="1"/><path d="M0.8 10.2 L3 4 H14.4 L12 10.2 Z" fill="url(#gp)" stroke="#3b4f68" stroke-width="1.2" stroke-linejoin="round"/></g><path d="M16.4 1.4 H22.8 M16.4 22 H22.8 M19.6 1.4 V22" stroke="#4d627d" stroke-width="3.4"/><path d="M16.8 1.4 H22.4 M16.8 22 H22.4 M19.6 1.4 V22" stroke="#eef2f7" stroke-width="1.5"/></svg>
<svg style="left:408px;top:41.6px" width="25" height="26" viewBox="0 0 25 26"><path d="M1 18.4 L3.4 3 Q3.6 1.6 5 1.6 H18 L22.6 18.4 Z" fill="#dfe5ed" stroke="#6d819c" stroke-width="1"/><path d="M0.8 18.6 H22.8 V22.4 Q22.8 24.6 20.6 24.6 H3 Q0.8 24.6 0.8 22.4 Z" fill="url(#gs)" stroke="#32465e" stroke-width="0.9"/><path d="M5.2 3.6 V9.6 Q5.2 11.2 6.8 11.2 H12.4 Q13.8 11.2 13.8 12.8 V17.6" fill="none" stroke="#4a607c" stroke-width="3.6"/><path d="M5.2 3.6 V9.6 Q5.2 11.2 6.8 11.2 H12.4 Q13.8 11.2 13.8 12.8 V17.6" fill="none" stroke="#f4f7fb" stroke-width="1.7"/><path d="M24 1.6 L17 8.4" stroke="#0a8aa8" stroke-width="4"/><path d="M23.6 2 L17.4 8" stroke="#26d4ee" stroke-width="2.2"/><path d="M13.4 7 L20 6 L14.6 12.6 Z" fill="#26d4ee" stroke="#0a8aa8" stroke-width="0.9"/></svg>
<svg style="left:438.8px;top:60px" width="10" height="6" viewBox="0 0 10 6"><path d="M0 0 H9.6 L4.8 5.4 Z" fill="#111"/></svg>
<div style="left:487px;top:42px;width:26.4px;height:26px;background:#fff;border:1.5px solid #f0802c"></div>
<div class="t" style="top:50.04px;left:489.2px;font-size:14.6px;color:#f0802c;font-weight:bold;letter-spacing:-0.3px">Plt</div>
<div class="t" style="top:45px;left:502.5px;font-size:6.5px;color:#f0802c;font-weight:bold">cw</div>
<svg style="left:508.4px;top:63px" width="4" height="4" viewBox="0 0 4 4"><path d="M4 0 V4 H0 Z" fill="#f0802c"/></svg>
<svg style="left:518.2px;top:54px" width="7" height="4" viewBox="0 0 7 4"><path d="M0 0 H6.4 L3.2 3.4 Z" fill="#8a8578"/></svg>
<svg style="left:533.5px;top:42px" width="25.5" height="25.6" viewBox="0 0 25.5 25.6"><rect x="0.5" y="0.5" width="24.4" height="24.6" rx="4.4" fill="url(#gsky)" stroke="#2a456e" stroke-width="0.8"/><path d="M0.8 19 L3 18.6 L4.4 16.2 H8 L9 13.6 H10.6 V3.4 H11.6 V13.4 H12.6 V3.4 H13.6 V13.6 H15.6 L16.8 16.2 H20.6 L22 18.6 L24.4 19 V21.4 Q24.4 24.8 21 24.8 H4.4 Q0.8 24.8 0.8 21.4 Z" fill="#05070c"/></svg>
<svg style="left:564.2px;top:54px" width="7" height="4" viewBox="0 0 7 4"><path d="M0 0 H6.4 L3.2 3.4 Z" fill="#8a8578"/></svg>
<svg style="left:577px;top:60px" width="10" height="6" viewBox="0 0 10 6"><path d="M0 0 H9.6 L4.8 5.4 Z" fill="#111"/></svg>
<svg style="left:33px;top:81.4px" width="22" height="23" viewBox="0 0 22 23"><rect x="0.4" y="0.4" width="21" height="22" rx="2.4" fill="url(#gs)"/><rect x="0.4" y="0.4" width="21" height="22" rx="2.4" fill="#3d526c" opacity="0.55"/><rect x="2.6" y="3.4" width="3.4" height="3.4" fill="none" stroke="#c9d4e2" stroke-width="0.8"/><path d="M8.4 5.1 H19" stroke="#f2f5f9" stroke-width="1.1"/><rect x="2.6" y="9.4" width="3.4" height="3.4" fill="none" stroke="#c9d4e2" stroke-width="0.8"/><path d="M8.4 11.1 H19" stroke="#f2f5f9" stroke-width="1.1"/><rect x="2.6" y="15.4" width="3.4" height="3.4" fill="none" stroke="#c9d4e2" stroke-width="0.8"/><path d="M8.4 17.1 H19" stroke="#f2f5f9" stroke-width="1.1"/></svg>
<div style="left:63px;top:80px;width:1px;height:27px;background:#c4c6d8"></div>
<svg style="left:75.6px;top:81px" width="21" height="23.4" viewBox="0 0 21 23.4"><path d="M0.6 0.6 H12 L18.6 7 V22.6 H0.6 Z" fill="url(#gp)" stroke="#4d627d" stroke-width="1.1"/><path d="M12 0.6 V7 H18.6" fill="#f4f7fb" stroke="#4d627d" stroke-width="0.9"/><path d="M3 5 H10 M3 7.6 H11 M3 10.2 H9 M3 12.8 H8.4 M3 15.4 H8.4 M3 18 H9" stroke="#a9b6c8" stroke-width="0.8"/><circle cx="12.8" cy="13.6" r="5.7" fill="url(#gr)" stroke="#8a0008" stroke-width="0.6"/><ellipse cx="12.6" cy="10.8" rx="3.6" ry="1.8" fill="#ff9a9a" opacity="0.7"/><path d="M10.6 11.4 L15 15.8 M15 11.4 L10.6 15.8" stroke="#fff" stroke-width="1.5"/></svg>
<svg style="left:103px;top:91.4px" width="7" height="4" viewBox="0 0 7 4"><path d="M0 0 H6.4 L3.2 3.4 Z" fill="#8a8578"/></svg>
<svg style="left:117px;top:81px" width="27" height="24" viewBox="0 0 27 24"><g fill="#b7c2d0"><circle cx="20.8" cy="3" r="2.2"/><path d="M16.4 5.8 L22 5.4 L24.6 10.4 L27 11.4 L26.4 13 L23.2 12 L22.2 10 L21.6 14 L24.6 18 L24 22 H22 L22.4 18.8 L19 15.4 L16.6 20 L13.6 20 L13.6 18.4 L15.6 18 Z"/></g><g fill="#33465e"><circle cx="12.6" cy="2.8" r="2.4"/><path d="M6.6 6.4 L13.6 5.4 L16.2 9.6 L19.2 10.8 L18.6 12.6 L15 11.6 L13.8 9.6 L13 14 L16.6 17.6 L16 22.4 H13.6 L14 18.6 L10 15.4 L8.4 19.6 L2 20.6 L1.6 18.6 L6.8 17.6 L8.6 11.6 L8.6 8.2 L6 9 L4.6 12.4 L2.8 11.8 L4.4 7.6 Z"/></g><path d="M0 23.4 H26.6" stroke="#6b7f99" stroke-width="1.1"/></svg>
<div style="left:149px;top:80px;width:1px;height:27px;background:#c4c6d8"></div>
<svg style="left:159.6px;top:81.2px" width="22" height="23" viewBox="0 0 22 23"><circle cx="10.6" cy="2.2" r="1.7" fill="none" stroke="#8a8a8a" stroke-width="1"/><path d="M10.6 3.6 L1.2 15.6 L10.6 20.4 L20.2 15.6 Z" fill="#d4d4d4" stroke="#8e8e8e" stroke-width="0.8"/><path d="M10.6 3.6 L10.6 20.4 L20.2 15.6 Z" fill="#a8a8a8"/><path d="M1.2 15.6 L10.6 20.4 L20.2 15.6 L20.2 17.6 L10.6 22.4 L1.2 17.6 Z" fill="#7d7d7d"/></svg>
<svg style="left:191px;top:81.2px" width="23" height="23" viewBox="0 0 23 23"><g transform="translate(1 0)"><circle cx="10.6" cy="2.2" r="1.7" fill="none" stroke="#8a8a8a" stroke-width="1"/><path d="M10.6 3.6 L1.2 15.6 L10.6 20.4 L20.2 15.6 Z" fill="#9fb0c6" stroke="#3b4f68" stroke-width="0.8"/><path d="M10.6 3.6 L10.6 20.4 L20.2 15.6 Z" fill="#4a607c"/><path d="M1.2 15.6 L10.6 20.4 L20.2 15.6 L20.2 17.6 L10.6 22.4 L1.2 17.6 Z" fill="#2f4259"/></g><rect x="0.6" y="9.8" width="8.8" height="10.8" fill="#f6f8fb" stroke="#3b4f68" stroke-width="1.1"/><path d="M2.2 12.4 H8 M2.2 14.4 H8 M2.2 16.4 H8 M2.2 18.4 H8" stroke="#6b7f99" stroke-width="0.8"/></svg>
<div style="left:221px;top:80px;width:1px;height:27px;background:#c4c6d8"></div>
<svg style="left:228.6px;top:80.8px" width="27" height="25" viewBox="0 0 27 25"><rect x="0.4" y="0.4" width="5.6" height="24.2" fill="#a2a2a2"/><path d="M0.4 0.4 V24.6 M6 0.4 V24.6" stroke="#7e7e7e" stroke-width="0.8"/><path d="M6.4 10 L22.6 1.6 M6.4 11.6 L24 5 M6.4 15.4 L22.6 22.6 M6.4 14.2 L24 19.4" stroke="#b4b4b4" stroke-width="0.9"/><rect x="6.2" y="10.4" width="19.6" height="4.6" rx="1.2" fill="url(#gg)" stroke="#9a9a9a" stroke-width="0.6"/><rect x="6.4" y="10.8" width="19" height="1.6" fill="#fff"/></svg>
<svg style="left:259.8px;top:98px" width="10" height="6" viewBox="0 0 10 6"><path d="M0 0 H9.6 L4.8 5.4 Z" fill="#111"/></svg>
<svg style="left:399.4px;top:80.6px" width="26" height="25" viewBox="0 0 26 25"><rect x="0.4" y="0.4" width="25" height="24" fill="#f3f4f6"/><path d="M2.0 0.5 V24 M0.5 1.6 H25" stroke="#dfe2e6" stroke-width="0.7"/><path d="M5.1 0.5 V24 M0.5 4.7 H25" stroke="#dfe2e6" stroke-width="0.7"/><path d="M8.2 0.5 V24 M0.5 7.800000000000001 H25" stroke="#dfe2e6" stroke-width="0.7"/><path d="M11.3 0.5 V24 M0.5 10.9 H25" stroke="#dfe2e6" stroke-width="0.7"/><path d="M14.4 0.5 V24 M0.5 14.0 H25" stroke="#dfe2e6" stroke-width="0.7"/><path d="M17.5 0.5 V24 M0.5 17.1 H25" stroke="#dfe2e6" stroke-width="0.7"/><path d="M20.6 0.5 V24 M0.5 20.200000000000003 H25" stroke="#dfe2e6" stroke-width="0.7"/><path d="M23.7 0.5 V24 M0.5 23.3 H25" stroke="#dfe2e6" stroke-width="0.7"/><path d="M0.6 14.4 L4.4 14 L6.6 10.6 L8.8 16.4 L11.2 8.4 L12.8 3.2 L14.4 13.6 L16.4 21 L18.6 12.2 L20 10.8 L21.4 14.4 L25.4 14.2" fill="none" stroke="#d00814" stroke-width="1.7" stroke-linejoin="round"/></svg>
<svg style="left:433px;top:80.6px" width="24" height="25" viewBox="0 0 24 25"><path d="M1.4 23.6 L7.4 16.8 V6.4 Q7.4 2.8 10.6 2.8 Q13.6 2.8 13.6 6 V10.6 L21.6 1.6" fill="none" stroke="#8f8f8f" stroke-width="3.6" stroke-dasharray="9 1.6 30 1.6 3 1.6 3 1.6 3"/><path d="M1.4 23.6 L7.4 16.8 V6.4 Q7.4 2.8 10.6 2.8 Q13.6 2.8 13.6 6 V10.6 L21.6 1.6" fill="none" stroke="#fbfbfb" stroke-width="1.7"/><path d="M18 14.6 V21.6 M14.5 18.1 H21.5" stroke="#2c2c2c" stroke-width="3.2"/><path d="M18 15.6 V20.6 M15.5 18.1 H20.5" stroke="#a8a8a8" stroke-width="1.1"/></svg>
<svg style="left:461.5px;top:98px" width="10" height="6" viewBox="0 0 10 6"><path d="M0 0 H9.6 L4.8 5.4 Z" fill="#111"/></svg>
<svg style="left:954.8px;top:82px" width="24" height="23" viewBox="0 0 24 23"><g opacity="0.85"><path d="M1.6 0.6 V22 M0.4 1.8 H23.6" stroke="#d23a3a" stroke-width="1.1"/><path d="M4.6 0.6 V22 M0.4 4.8 H23.6" stroke="#d23a3a" stroke-width="1.1"/><path d="M7.6 0.6 V22 M0.4 7.8 H23.6" stroke="#d23a3a" stroke-width="1.1"/><path d="M10.6 0.6 V22 M0.4 10.8 H23.6" stroke="#d23a3a" stroke-width="1.1"/><path d="M13.6 0.6 V22 M0.4 13.8 H23.6" stroke="#d23a3a" stroke-width="1.1"/><path d="M16.6 0.6 V22 M0.4 16.8 H23.6" stroke="#d23a3a" stroke-width="1.1"/><path d="M19.6 0.6 V22 M0.4 19.8 H23.6" stroke="#d23a3a" stroke-width="1.1"/><path d="M22.6 0.6 V22 M0.4 22.8 H23.6" stroke="#d23a3a" stroke-width="1.1"/></g><rect x="0" y="0" width="9" height="23" fill="#f1f1f3" opacity="0.55"/><rect x="0" y="0" width="24" height="5" fill="#f1f1f3" opacity="0.45"/><ellipse cx="15" cy="14.4" rx="6.4" ry="3" fill="#5a2020" opacity="0.45"/><path d="M15 4.2 L8.4 17.8" stroke="#3b4f68" stroke-width="3"/><path d="M14.8 5 L8.6 17.4" stroke="#dbe3ee" stroke-width="1.1"/></svg>
<svg style="left:988.6px;top:83px" width="21" height="21" viewBox="0 0 21 21"><path d="M0.8 7 L9.6 1 H19.4 V9.4 L13.2 19.6 H0.8 Z" fill="#f7f9fb" stroke="#3b4f68" stroke-width="1.1" stroke-linejoin="round"/><rect x="0.8" y="7" width="12.4" height="12.6" fill="url(#gp)" stroke="#3b4f68" stroke-width="1.2"/><path d="M13.2 7 L19.4 1 M13.2 1.4 H19 V7" fill="none" stroke="#3b4f68" stroke-width="0.9"/><path d="M13.2 7 L19.4 9.4" stroke="#8da0b8" stroke-width="0.7"/></svg>
<div style="left:1015px;top:77px;width:32px;height:32px;background:#c9ddf5;border:1.5px solid #3393f3"></div>
<svg style="left:1023.4px;top:85.6px" width="15" height="18" viewBox="0 0 15 18"><path d="M0.8 3.6 Q7 -0.6 13.8 3.6" fill="none" stroke="#33465e" stroke-width="2.6"/><rect x="5" y="0.6" width="4.4" height="2.4" fill="#33465e"/><rect x="5.6" y="3.6" width="3.2" height="13.4" fill="url(#gh)" stroke="#33465e" stroke-width="0.8"/></svg>
<svg style="left:1048.8px;top:98px" width="10" height="6" viewBox="0 0 10 6"><path d="M0 0 H9.6 L4.8 5.4 Z" fill="#111"/></svg>
<div style="left:1085px;top:39.2px;width:46px;height:31.4px;background:#c9ddf5;border:1.5px solid #3393f3"></div>
<div style="left:1131px;top:39.2px;width:46px;height:31.4px;background:#c9ddf5;border:1.5px solid #3393f3"></div>
<div style="left:1177px;top:39.2px;width:46px;height:31.4px;background:#c9ddf5;border:1.5px solid #3393f3"></div>
<div style="left:1223px;top:39.2px;width:46px;height:31.4px;background:#c9ddf5;border:1.5px solid #3393f3"></div>
<svg style="left:1119.6px;top:54px" width="7" height="4" viewBox="0 0 7 4"><path d="M0 0 H6.4 L3.2 3.4 Z" fill="#8a8578"/></svg>
<svg style="left:1165.6px;top:54px" width="7" height="4" viewBox="0 0 7 4"><path d="M0 0 H6.4 L3.2 3.4 Z" fill="#8a8578"/></svg>
<svg style="left:1211.6px;top:54px" width="7" height="4" viewBox="0 0 7 4"><path d="M0 0 H6.4 L3.2 3.4 Z" fill="#8a8578"/></svg>
<svg style="left:1257.6px;top:54px" width="7" height="4" viewBox="0 0 7 4"><path d="M0 0 H6.4 L3.2 3.4 Z" fill="#8a8578"/></svg>
<svg style="left:1090.8px;top:44.8px" width="23" height="21" viewBox="0 0 23 21"><rect x="0.8" y="0.6" width="20.6" height="6" rx="3" fill="#fbfcfe" stroke="#33465e" stroke-width="1.2"/><ellipse cx="3.4" cy="3.6" rx="2" ry="2.6" fill="#8296b0" stroke="#33465e" stroke-width="0.8"/><path d="M10.6 19.6 V12.6 H7.4 L11.4 8 L15.4 12.6 H12.2 V19.6 Z" fill="#d40010" stroke="#b0000c" stroke-width="0.6"/></svg>
<svg style="left:1137px;top:46.4px" width="23" height="19" viewBox="0 0 23 19"><path d="M10.6 0.6 Q12 0.6 13 2 L21.6 9.4 Q11 12.6 0.8 9.4 L9 2 Q9.6 0.6 10.6 0.6 Z" fill="url(#gg)" stroke="#5f6d7f" stroke-width="0.7"/><path d="M10.8 1 L21 9.4 Q15 11 10.8 11 Z" fill="#6f7d8f" opacity="0.75"/><path d="M3.4 12.4 L1 16.4 M7.4 13 L5 17 M11.4 13.2 L9 17.2 M15.4 13 L13 17 M19 12.4 L16.6 16.4" stroke="#d01824" stroke-width="1.3"/></svg>
<svg style="left:1183.6px;top:46.6px" width="21" height="20" viewBox="0 0 21 20"><rect x="0.6" y="1.6" width="19.4" height="15.4" fill="#8195ae" stroke="#33465e" stroke-width="1.1"/><rect x="0.6" y="1.6" width="19.4" height="2.2" fill="#33465e"/><path d="M0.6 0.4 V2.6 M20 0.4 V2.6" stroke="#33465e" stroke-width="1.1"/><rect x="4.2" y="5.6" width="12.2" height="9" fill="#dbe3ee" stroke="#33465e" stroke-width="0.7"/><path d="M4.4 7.6 H16.2 M4.4 9.6 H16.2 M4.4 11.6 H16.2 M4.4 13.4 H16.2" stroke="#33465e" stroke-width="0.9"/><path d="M8.4 17.2 H12.4 L10.4 19.4 Z" fill="#33465e"/></svg>
<svg style="left:1230.6px;top:46.4px" width="21" height="18" viewBox="0 0 21 18"><path d="M7.6 2.6 L14 15.6 H1.4 Z" fill="none" stroke="#33465e" stroke-width="2.1" stroke-linejoin="round"/><path d="M1 16.8 H14.4" stroke="#8da0b8" stroke-width="0.9"/><path d="M15.2 1.2 L19.4 5.8 M19.4 1.2 L15.2 5.8" stroke="#d01020" stroke-width="1.5"/></svg>
<svg style="left:1275px;top:47px" width="23" height="18" viewBox="0 0 23 18"><path d="M10.8 0.4 V8.6" stroke="#8e8e8e" stroke-width="1.4"/><path d="M8.2 6 L10.8 10 L13.4 6 Z" fill="#808080"/><rect x="0.6" y="11.2" width="20.8" height="5.2" rx="2.6" fill="url(#gg)" stroke="#a4a4a4" stroke-width="1"/><rect x="1.6" y="11.8" width="18.6" height="1.8" rx="0.9" fill="#fff"/><rect x="8.4" y="10" width="5" height="2.8" fill="#f4f4f4" stroke="#a8a8a8" stroke-width="0.7"/></svg>
<svg style="left:1305.2px;top:54px" width="7" height="4" viewBox="0 0 7 4"><path d="M0 0 H6.4 L3.2 3.4 Z" fill="#b9b4a8"/></svg>
<div style="left:1315px;top:39.4px;width:32px;height:31px;background:#f6f6f7"></div>
<svg style="left:1322px;top:45.8px" width="20" height="20" viewBox="0 0 20 20"><rect x="0.6" y="0.6" width="5" height="18.2" rx="1" fill="url(#gg)" stroke="#a9a9a9" stroke-width="0.8"/><rect x="5.6" y="3.4" width="13.2" height="12.4" rx="1.2" fill="url(#gg)" stroke="#a9a9a9" stroke-width="0.8"/><path d="M0.6 9.6 H18.8" stroke="#8e8e8e" stroke-width="0.8"/></svg>
<div style="left:1350px;top:42px;width:1px;height:27px;background:#c4c6d8"></div>
<svg style="left:1364px;top:45.2px" width="12" height="20" viewBox="0 0 12 20"><path d="M1 0.8 H4.6 L10.4 3.4 V15 L4.6 18 H1 Z" fill="url(#gg)" stroke="#ababab" stroke-width="0.8"/><path d="M1 9.4 H10.4 M4.6 1 V18" stroke="#8e8e8e" stroke-width="0.8"/></svg>
<svg style="left:1394px;top:45.2px" width="23" height="21" viewBox="0 0 23 21"><rect x="0.6" y="0.6" width="5.4" height="18.6" rx="1" fill="#4f545c" stroke="#33373d" stroke-width="0.7"/><rect x="6" y="3.6" width="11.8" height="12.4" fill="#6c727b" stroke="#3d4148" stroke-width="0.7"/><rect x="6" y="3.6" width="11.8" height="3" fill="#54595f"/><path d="M0.6 9.8 H17.8" stroke="#3d4148" stroke-width="0.6"/><rect x="9.6" y="13.6" width="11.6" height="6.4" fill="#f7f7f7" stroke="#a8a8a8" stroke-width="0.7"/><path d="M11.4 16.8 H18.6 M16.8 15.2 L18.8 16.8 L16.8 18.4" fill="none" stroke="#7e7e7e" stroke-width="0.9"/></svg>
<svg style="left:1422.6px;top:54px" width="7" height="4" viewBox="0 0 7 4"><path d="M0 0 H6.4 L3.2 3.4 Z" fill="#b9b4a8"/></svg>
<svg style="left:1436.6px;top:45px" width="24" height="21" viewBox="0 0 24 21"><path d="M1 0.4 V20.4 M22.6 0.4 V20.4 M3.6 1.4 V19.4 M20 1.4 V19.4" stroke="#9a9a9a" stroke-width="1"/><path d="M3.6 3.4 L11.8 10.4 L3.6 17.4 Z M20 3.4 L11.8 10.4 L20 17.4 Z" fill="#f4f4f4" stroke="#a6a6a6" stroke-width="0.9"/><path d="M3.6 10.4 H20 M8 7 V13.8 M15.6 7 V13.8 M11.8 3 V17.6" stroke="#b1b1b1" stroke-width="0.7"/></svg>
<svg style="left:1469.6px;top:46.4px" width="24" height="19" viewBox="0 0 24 19"><path d="M0.8 1.6 Q0.8 0.6 1.8 0.6 H21.6 Q22.6 0.6 22.6 1.6 V8 Q22.6 9 21.6 9 H16.4 V19.2 H7 V9 H1.8 Q0.8 9 0.8 8 Z" fill="url(#gv)" stroke="#4d627d" stroke-width="1"/><rect x="1.4" y="1.2" width="20.6" height="2" fill="#8296b0"/><path d="M1.6 5.6 H21.8 M11.7 5.6 V18.8" stroke="#c01020" stroke-width="1"/></svg>
<div style="left:1500px;top:42px;width:1px;height:27px;background:#c4c6d8"></div>
<div style="left:1505.2px;top:39.2px;width:46px;height:31.4px;background:#c9ddf5;border:1.5px solid #3393f3"></div>
<div style="left:1551.2px;top:39.2px;width:46px;height:31.4px;background:#c9ddf5;border:1.5px solid #3393f3"></div>
<svg style="left:1512px;top:44.6px" width="21" height="21" viewBox="0 0 21 21"><path d="M10 10.4 V1.6 M10 10.4 L2.2 18.4 M10 10.4 L17.8 18.4" stroke="#33465e" stroke-width="1.7"/><path d="M7.6 3.4 L10 0.2 L12.4 3.4 Z M0.8 16 L1 19.8 L4.6 19.4 Z M19.2 16 L19 19.8 L15.4 19.4 Z" fill="#33465e"/></svg>
<div class="t" style="top:48.45px;left:1514px;font-size:7.5px;color:#d01020;font-weight:bold">x</div>
<div class="t" style="top:49.21px;left:1525.6px;font-size:6.6px;color:#d01020;font-weight:bold">Y</div>
<div class="t" style="top:58.65px;left:1519.6px;font-size:7.5px;color:#d01020;font-weight:bold">z</div>
<svg style="left:1540px;top:54px" width="7" height="4" viewBox="0 0 7 4"><path d="M0 0 H6.4 L3.2 3.4 Z" fill="#8a8578"/></svg>
<svg style="left:1586px;top:54px" width="7" height="4" viewBox="0 0 7 4"><path d="M0 0 H6.4 L3.2 3.4 Z" fill="#8a8578"/></svg>
<svg style="left:1556px;top:49.2px" width="25" height="8" viewBox="0 0 25 8"><path d="M0.4 4 H24" stroke="#33465e" stroke-width="1.3"/><rect x="9.6" y="1.4" width="5.2" height="5.2" fill="#fbfcfe" stroke="#33465e" stroke-width="1.1"/></svg>
<div class="t" style="top:57.72px;left:1563px;font-size:8.6px;color:#d01020;font-weight:bold">10</div>
<div style="left:1600.5px;top:42px;width:1px;height:27px;background:#c4c6d8"></div>
<svg style="left:1610.6px;top:42.2px" width="22" height="26" viewBox="0 0 22 26"><path d="M0.8 1 H7 M0.8 24.4 H7 M3.9 1 V24.4" stroke="#2a3a4f" stroke-width="1.6" stroke-dasharray="2.2 1.6"/><path d="M0.6 1.2 H7.2 M0.6 24.2 H7.2" stroke="#2a3a4f" stroke-width="1.8"/><rect x="12.2" y="0.8" width="7.6" height="23.8" fill="url(#gp)" stroke="#2a3a4f" stroke-width="1.2"/><path d="M12.6 3.6 H16 M12.6 6 H15 M12.6 8.4 H16 M12.6 10.8 H15 M12.6 13.2 H16 M12.6 15.6 H15 M12.6 18 H16 M12.6 20.4 H15 M12.6 22.6 H16" stroke="#2a3a4f" stroke-width="0.9"/></svg>
<div style="left:1640px;top:42px;width:1px;height:27px;background:#c4c6d8"></div>
<svg style="left:1650px;top:44.6px" width="23" height="22" viewBox="0 0 23 22"><rect x="0.8" y="0.8" width="4.6" height="19.6" rx="1.2" fill="#f7f7f7" stroke="#a9a9a9" stroke-width="0.8" stroke-dasharray="1.6 1"/><rect x="3.4" y="8.2" width="18.2" height="4.6" rx="2.3" fill="#fbfcfe" stroke="#7d8da3" stroke-width="0.9"/><ellipse cx="19.8" cy="10.5" rx="1.6" ry="2.1" fill="#4d627d"/></svg>
<div style="left:1680px;top:42px;width:1px;height:27px;background:#c4c6d8"></div>
<svg style="left:1690.6px;top:45.4px" width="22" height="20" viewBox="0 0 22 20"><path d="M1 17 L3 6 L4.4 4.6 V2 Q4.4 0.6 5.8 0.6 H7.2 Q8.6 0.6 8.6 2 V4.6 L9.8 6 L10.2 17 Q10.2 19 8 19 H3 Q1 19 1 17 Z M11.4 17 L11.8 6 L13 4.6 V2 Q13 0.6 14.4 0.6 H15.8 Q17.2 0.6 17.2 2 V4.6 L18.6 6 L20.6 17 Q20.6 19 18.6 19 H13.6 Q11.4 19 11.4 17 Z" fill="url(#gs)" stroke="#2a3a4f" stroke-width="0.7"/><path d="M2.8 8 H9.6 M12 8 H18.8 M2.4 11 H9.8 M11.8 11 H19.4" stroke="#9fb0c6" stroke-width="0.7"/><rect x="9.6" y="7" width="2.6" height="4" fill="#2a3a4f"/></svg>
<svg style="left:1718.8px;top:60px" width="10" height="6" viewBox="0 0 10 6"><path d="M0 0 H9.6 L4.8 5.4 Z" fill="#111"/></svg>
<svg style="left:1767px;top:47.4px" width="22" height="13" viewBox="0 0 22 13"><rect x="1.4" y="0.6" width="19.4" height="11" rx="1" fill="url(#gr)" stroke="#7a0008" stroke-width="0.8"/><rect x="0.4" y="0.2" width="2" height="12" fill="#b4000c"/></svg>
<div class="t" style="top:50.6px;left:1772.6px;font-size:7.8px;color:#fff;font-weight:bold">113</div>
<svg style="left:1795.8px;top:60px" width="10" height="6" viewBox="0 0 10 6"><path d="M0 0 H9.6 L4.8 5.4 Z" fill="#111"/></svg>
<svg style="left:1842.6px;top:45px" width="23" height="22" viewBox="0 0 23 22"><path d="M11.6 1 V8 M11.6 13 V21 M3 10.6 H9 M14 10.6 H20.6" stroke="#e01020" stroke-width="1.3"/><path d="M6 5 L9.6 8.6 M17.4 5 L13.6 8.6" stroke="#e01020" stroke-width="1.3"/><path d="M2.6 2 L5.2 4.4 M20.6 2 L18 4.4 M2.4 19.4 L9.6 12.6 M20 19 L13.6 12.6" stroke="#e01020" stroke-width="1.2" stroke-dasharray="2.4 1.4"/><circle cx="11.6" cy="10.6" r="1.6" fill="none" stroke="#e01020" stroke-width="1"/><circle cx="20" cy="19" r="1.1" fill="#e01020"/></svg>
<svg style="left:1875px;top:43.6px" width="25" height="25" viewBox="0 0 25 25"><path d="M2 9.6 Q4 2.4 12.4 3 L12.6 0.4 L22.6 2.6 L20.4 11 L18 8.4 Q13.4 6 8.4 9.4 Z" fill="#5fb33c" stroke="#2c6a1a" stroke-width="0.9" stroke-linejoin="round"/><path d="M23 14 Q20.6 21.6 12 20.6 L11.4 23.6 L1.4 20 L5 12.4 L6.8 15 Q12 17.6 17 14.4 Z" fill="#5fb33c" stroke="#2c6a1a" stroke-width="0.9" stroke-linejoin="round"/><path d="M4 8.4 Q6.6 4.4 12.4 4.6 M21 15.4 Q18 19.6 12 19" stroke="#b5e08f" stroke-width="1" fill="none"/></svg>
<svg style="left:1904.6px;top:60px" width="10" height="6" viewBox="0 0 10 6"><path d="M0 0 H9.6 L4.8 5.4 Z" fill="#111"/></svg>
<svg style="left:1097.4px;top:82.6px" width="22" height="23" viewBox="0 0 22 23"><circle cx="7.6" cy="7.6" r="6.3" fill="#f4f6fa" stroke="#6b7f99" stroke-width="2"/><circle cx="7.6" cy="7.6" r="7.2" fill="none" stroke="#43566f" stroke-width="0.6"/><path d="M7.6 3 V12.2 M3 7.6 H12.2" stroke="#51657f" stroke-width="0.9"/><path d="M7.6 2.4 L6 4.4 H9.2 Z M7.6 12.8 L6 10.8 H9.2 Z M2.4 7.6 L4.4 6 V9.2 Z M12.8 7.6 L10.8 6 V9.2 Z" fill="#3b4f68"/><path d="M12.2 12.2 L18.6 19.4" stroke="#3b4f68" stroke-width="3.3" stroke-linecap="round"/><path d="M12.8 13.4 L18 19.2" stroke="#a9bbd2" stroke-width="0.9"/><path d="M17 19.6 L19.8 21.4 L20.6 18.2 Z" fill="#3b4f68"/></svg>
<svg style="left:1130px;top:82.6px" width="22" height="23" viewBox="0 0 22 23"><circle cx="7.6" cy="7.6" r="6.3" fill="#f4f6fa" stroke="#6b7f99" stroke-width="2"/><circle cx="7.6" cy="7.6" r="7.2" fill="none" stroke="#43566f" stroke-width="0.6"/><rect x="4.4" y="5" width="6" height="5.6" fill="#fff" stroke="#51657f" stroke-width="1"/><rect x="4.4" y="4" width="6" height="1.8" fill="#51657f"/><path d="M12.2 12.2 L18.6 19.4" stroke="#3b4f68" stroke-width="3.3" stroke-linecap="round"/><path d="M12.8 13.4 L18 19.2" stroke="#a9bbd2" stroke-width="0.9"/><path d="M17 19.6 L19.8 21.4 L20.6 18.2 Z" fill="#3b4f68"/></svg>
<svg style="left:1160px;top:82px" width="24" height="24" viewBox="0 0 24 24"><rect x="0.6" y="0.6" width="20" height="20" fill="none" stroke="#33465e" stroke-width="0.9" stroke-dasharray="2 1.4"/><g transform="translate(2.6 2.6)"><circle cx="7.6" cy="7.6" r="6.3" fill="#f4f6fa" stroke="#6b7f99" stroke-width="2"/><circle cx="7.6" cy="7.6" r="7.2" fill="none" stroke="#43566f" stroke-width="0.6"/><path d="M12.2 12.2 L18.6 19.4" stroke="#3b4f68" stroke-width="3.3" stroke-linecap="round"/><path d="M12.8 13.4 L18 19.2" stroke="#a9bbd2" stroke-width="0.9"/><path d="M17 19.6 L19.8 21.4 L20.6 18.2 Z" fill="#3b4f68"/></g></svg>
<div style="left:1191.4px;top:80px;width:1px;height:27px;background:#c4c6d8"></div>
<div style="left:1196.3px;top:77.3px;width:31.5px;height:31.4px;background:#c9ddf5;border:1.5px solid #3393f3"></div>
<svg style="left:1199.4px;top:82px" width="26" height="22" viewBox="0 0 26 22"><g transform="scale(1.1 1)"><path d="M8.7 18.1 A7.8 7.8 0 0 1 8.7 3.9 M15.3 3.9 A7.8 7.8 0 0 1 15.3 18.1" fill="none" stroke="#33465e" stroke-width="3.6"/><path d="M14.4 1.6 L6.6 -0.4 L10.2 8.2 Z M9.6 20.4 L17.4 22.4 L13.8 13.8 Z" fill="#33465e"/></g></svg>
<svg style="left:1232.6px;top:80.6px" width="24" height="26" viewBox="0 0 24 26"><ellipse cx="11" cy="13.6" rx="9.6" ry="3.4" fill="none" stroke="#33465e" stroke-width="1.3"/><rect x="9" y="0.8" width="4" height="23.6" rx="1.6" fill="#f4f7fb" stroke="#33465e" stroke-width="1.2"/><path d="M17 14.6 L21.6 16.4 L17.6 19.2" fill="none" stroke="#33465e" stroke-width="1.3"/><path d="M1.6 12.6 Q6 10.2 9 10.4" stroke="#f1f1f3" stroke-width="2.4" fill="none"/></svg>
<svg style="left:1263.6px;top:81.2px" width="25" height="25" viewBox="0 0 25 25"><path transform="scale(1.09)" d="M11.2 0.6 L15 5.4 H12.6 V9.8 H17 V7.4 L21.8 11.2 L17 15 V12.6 H12.6 V17 H15 L11.2 21.8 L7.4 17 H9.8 V12.6 H5.4 V15 L0.6 11.2 L5.4 7.4 V9.8 H9.8 V5.4 H7.4 Z" fill="#33465e"/></svg>
<svg style="left:1298.6px;top:85.6px" width="20" height="19" viewBox="0 0 20 19"><path d="M0.6 2.2 H9" stroke="#33465e" stroke-width="3"/><path d="M8 12.4 H19.4 M13.7 6.8 V18" stroke="#33465e" stroke-width="3"/></svg>
<div style="left:1327.4px;top:80px;width:1px;height:27px;background:#c4c6d8"></div>
<svg style="left:1344.4px;top:85.6px" width="12" height="18" viewBox="0 0 12 18"><path d="M0.8 0.6 V14.2 L4.2 11 L6.8 16.6 L9 15.6 L6.6 10.2 H11 Z" fill="#33465e" stroke="#2a3a4f" stroke-width="0.6"/></svg>
<svg style="left:1367.6px;top:82px" width="22" height="23" viewBox="0 0 22 23"><rect x="0.6" y="0.6" width="20.4" height="20" fill="none" stroke="#33465e" stroke-width="0.9" stroke-dasharray="2 1.4"/><g transform="translate(10 6)"><path d="M0.8 0.6 V14.2 L4.2 11 L6.8 16.6 L9 15.6 L6.6 10.2 H11 Z" fill="#33465e" stroke="#2a3a4f" stroke-width="0.6"/></g></svg>
<div style="left:1399.2px;top:80px;width:1px;height:27px;background:#c4c6d8"></div>
<div style="left:1404px;top:77.3px;width:32px;height:31.4px;background:#c9ddf5;border:1.5px solid #3393f3"></div>
<svg style="left:1410.4px;top:82px" width="20" height="23" viewBox="0 0 20 23"><path d="M0.8 4.4 V18.2 Q0.8 21.6 9.6 21.6 Q18.4 21.6 18.4 18.2 V4.4 Z" fill="url(#gh)" stroke="#3b4f68" stroke-width="1.1"/><ellipse cx="9.6" cy="4.4" rx="8.8" ry="3.4" fill="#90a4be" stroke="#3b4f68" stroke-width="1.1"/></svg>
<svg style="left:1442px;top:82px" width="20" height="23" viewBox="0 0 20 23"><path d="M0.8 4.4 V18.2 Q0.8 21.6 9.6 21.6 Q18.4 21.6 18.4 18.2 V4.4 Z" fill="url(#gc)" stroke="#5b708a" stroke-width="1.1"/><ellipse cx="9.6" cy="4.4" rx="8.8" ry="3.4" fill="#f4f7fb" stroke="#5b708a" stroke-width="1.1"/><path d="M6 7.4 V21 M13.4 7.4 V21" stroke="#5b708a" stroke-width="1"/></svg>
<svg style="left:1474px;top:82px" width="20" height="23" viewBox="0 0 20 23"><path d="M0.8 4.4 V18.2 Q0.8 21.6 9.6 21.6 Q18.4 21.6 18.4 18.2 V4.4 Z" fill="#f4f7fb" stroke="#33465e" stroke-width="1.1"/><ellipse cx="9.6" cy="4.4" rx="8.8" ry="3.4" fill="#f4f7fb" stroke="#33465e" stroke-width="1.1"/><path d="M4.4 6.8 V20.4 M9.6 7.8 V21.4 M14.8 6.8 V20.4 M4.4 1.8 V6 M14.8 1.8 V6 M9.6 1 V7" stroke="#33465e" stroke-width="1.2"/><path d="M0.8 12.4 Q9.6 16.4 18.4 12.4" fill="none" stroke="#33465e" stroke-width="1.2"/></svg>
<svg style="left:1506px;top:82px" width="20" height="23" viewBox="0 0 20 23"><path d="M0.8 4.4 V18.2 Q0.8 21.6 9.6 21.6 Q18.4 21.6 18.4 18.2 V4.4 Z" fill="#fdfdfe" stroke="#51657f" stroke-width="1.1"/><ellipse cx="9.6" cy="4.4" rx="8.8" ry="3.4" fill="#f4f7fb" stroke="#51657f" stroke-width="1.1"/></svg>
<svg style="left:1538px;top:82px" width="20" height="23" viewBox="0 0 20 23"><path d="M0.8 4.4 V18.2 Q0.8 21.6 9.6 21.6 Q18.4 21.6 18.4 18.2 V4.4 Z" fill="#fafbfc" stroke="#c3cad4" stroke-width="1.1"/><ellipse cx="9.6" cy="4.4" rx="8.8" ry="3.4" fill="#f7f8fa" stroke="#c3cad4" stroke-width="1.1"/><circle cx="6.6" cy="13" r="2" fill="#f0f2f5" stroke="#c3cad4" stroke-width="0.8"/></svg>
<svg style="left:1571px;top:80.6px" width="18" height="24" viewBox="0 0 18 24"><path d="M1.6 0.6 V22.6" stroke="#6b7480" stroke-width="1.7"/><path d="M8.6 0.6 V22.6" stroke="#c4101c" stroke-width="2.8"/><path d="M15.6 0.6 V22.6" stroke="#33465e" stroke-width="1.7"/></svg>
<svg style="left:1597.4px;top:98px" width="10" height="6" viewBox="0 0 10 6"><path d="M0 0 H9.6 L4.8 5.4 Z" fill="#111"/></svg>
<svg style="left:1647px;top:84.6px" width="20" height="19" viewBox="0 0 20 19"><g transform="scale(1 0.9)"><path d="M0.8 6.4 L5.6 1 H19 V14.4 L14.2 19.6 H0.8 Z" fill="#f4f7fb" stroke="#33465e" stroke-width="1.2" stroke-linejoin="round"/><path d="M0.8 6.4 L5.6 1 H19 L14.2 6.4 Z" fill="#f4f7fb"/><path d="M14.2 6.4 L19 1 V14.4 L14.2 19.6 Z" fill="#f4f7fb"/><rect x="0.8" y="6.4" width="13.4" height="13.2" fill="#51657f"/><path d="M5.6 1 V14.4 H19 M5.6 14.4 L0.8 19.6" fill="none" stroke="#33465e" stroke-width="0.9"/><path d="M5.6 1 V14.4 H19 L14.2 19.6 H0.8 V6.4 Z" fill="none" opacity="0.9"/><path d="M0.8 6.4 H14.2 V19.6 M14.2 6.4 L19 1" fill="none" stroke="#33465e" stroke-width="1.2"/><path d="M0.8 6.4 L5.6 1 H19 V14.4 L14.2 19.6 H0.8 Z" fill="none" stroke="#33465e" stroke-width="1.3" stroke-linejoin="round"/></g></svg>
<svg style="left:1679px;top:84.6px" width="20" height="19" viewBox="0 0 20 19"><g transform="scale(1 0.9)"><path d="M0.8 6.4 L5.6 1 H19 V14.4 L14.2 19.6 H0.8 Z" fill="#f4f7fb" stroke="#33465e" stroke-width="1.2" stroke-linejoin="round"/><path d="M0.8 6.4 L5.6 1 H19 L14.2 6.4 Z" fill="none"/><path d="M14.2 6.4 L19 1 V14.4 L14.2 19.6 Z" fill="none"/><rect x="0.8" y="6.4" width="13.4" height="13.2" fill="none"/><rect x="5.6" y="1" width="13.4" height="13.4" fill="#51657f"/><path d="M5.6 1 V14.4 H19 M5.6 14.4 L0.8 19.6" fill="none" stroke="#33465e" stroke-width="0.9"/><path d="M5.6 1 V14.4 H19 L14.2 19.6 H0.8 V6.4 Z" fill="none" opacity="0.9"/><path d="M0.8 6.4 H14.2 V19.6 M14.2 6.4 L19 1" fill="none" stroke="#33465e" stroke-width="1.2"/><path d="M0.8 6.4 L5.6 1 H19 V14.4 L14.2 19.6 H0.8 Z" fill="none" stroke="#33465e" stroke-width="1.3" stroke-linejoin="round"/></g></svg>
<div style="left:1708.4px;top:80px;width:1px;height:27px;background:#c4c6d8"></div>
<svg style="left:1719px;top:84.6px" width="20" height="19" viewBox="0 0 20 19"><g transform="scale(1 0.9)"><path d="M0.8 6.4 L5.6 1 H19 V14.4 L14.2 19.6 H0.8 Z" fill="#f4f7fb" stroke="#33465e" stroke-width="1.2" stroke-linejoin="round"/><path d="M0.8 6.4 L5.6 1 H19 L14.2 6.4 Z" fill="#51657f"/><path d="M14.2 6.4 L19 1 V14.4 L14.2 19.6 Z" fill="none"/><rect x="0.8" y="6.4" width="13.4" height="13.2" fill="none"/><path d="M5.6 1 V14.4 H19 M5.6 14.4 L0.8 19.6" fill="none" stroke="#33465e" stroke-width="0.9"/><path d="M5.6 1 V14.4 H19 L14.2 19.6 H0.8 V6.4 Z" fill="none" opacity="0.9"/><path d="M0.8 6.4 H14.2 V19.6 M14.2 6.4 L19 1" fill="none" stroke="#33465e" stroke-width="1.2"/><path d="M0.8 6.4 L5.6 1 H19 V14.4 L14.2 19.6 H0.8 Z" fill="none" stroke="#33465e" stroke-width="1.3" stroke-linejoin="round"/></g></svg>
<svg style="left:1751.4px;top:84.6px" width="20" height="19" viewBox="0 0 20 19"><g transform="scale(1 0.9)"><path d="M0.8 6.4 L5.6 1 H19 V14.4 L14.2 19.6 H0.8 Z" fill="#f4f7fb" stroke="#33465e" stroke-width="1.2" stroke-linejoin="round"/><path d="M0.8 6.4 L5.6 1 H19 L14.2 6.4 Z" fill="none"/><path d="M14.2 6.4 L19 1 V14.4 L14.2 19.6 Z" fill="none"/><rect x="0.8" y="6.4" width="13.4" height="13.2" fill="none"/><path d="M0.8 19.6 L5.6 14.4 H19 L14.2 19.6 Z" fill="#51657f"/><path d="M5.6 1 V14.4 H19 M5.6 14.4 L0.8 19.6" fill="none" stroke="#33465e" stroke-width="0.9"/><path d="M5.6 1 V14.4 H19 L14.2 19.6 H0.8 V6.4 Z" fill="none" opacity="0.9"/><path d="M0.8 6.4 H14.2 V19.6 M14.2 6.4 L19 1" fill="none" stroke="#33465e" stroke-width="1.2"/><path d="M0.8 6.4 L5.6 1 H19 V14.4 L14.2 19.6 H0.8 Z" fill="none" stroke="#33465e" stroke-width="1.3" stroke-linejoin="round"/></g></svg>
<div style="left:1780.4px;top:80px;width:1px;height:27px;background:#c4c6d8"></div>
<svg style="left:1791px;top:84.6px" width="20" height="19" viewBox="0 0 20 19"><g transform="scale(1 0.9)"><path d="M0.8 6.4 L5.6 1 H19 V14.4 L14.2 19.6 H0.8 Z" fill="#f4f7fb" stroke="#33465e" stroke-width="1.2" stroke-linejoin="round"/><path d="M0.8 6.4 L5.6 1 H19 L14.2 6.4 Z" fill="none"/><path d="M14.2 6.4 L19 1 V14.4 L14.2 19.6 Z" fill="none"/><rect x="0.8" y="6.4" width="13.4" height="13.2" fill="none"/><path d="M0.8 6.4 L5.6 1 V14.4 L0.8 19.6 Z" fill="#51657f"/><path d="M5.6 1 V14.4 H19 M5.6 14.4 L0.8 19.6" fill="none" stroke="#33465e" stroke-width="0.9"/><path d="M5.6 1 V14.4 H19 L14.2 19.6 H0.8 V6.4 Z" fill="none" opacity="0.9"/><path d="M0.8 6.4 H14.2 V19.6 M14.2 6.4 L19 1" fill="none" stroke="#33465e" stroke-width="1.2"/><path d="M0.8 6.4 L5.6 1 H19 V14.4 L14.2 19.6 H0.8 Z" fill="none" stroke="#33465e" stroke-width="1.3" stroke-linejoin="round"/></g></svg>
<svg style="left:1822.8px;top:84.6px" width="20" height="19" viewBox="0 0 20 19"><g transform="scale(1 0.9)"><path d="M0.8 6.4 L5.6 1 H19 V14.4 L14.2 19.6 H0.8 Z" fill="#f4f7fb" stroke="#33465e" stroke-width="1.2" stroke-linejoin="round"/><path d="M0.8 6.4 L5.6 1 H19 L14.2 6.4 Z" fill="none"/><path d="M14.2 6.4 L19 1 V14.4 L14.2 19.6 Z" fill="#51657f"/><rect x="0.8" y="6.4" width="13.4" height="13.2" fill="none"/><path d="M5.6 1 V14.4 H19 M5.6 14.4 L0.8 19.6" fill="none" stroke="#33465e" stroke-width="0.9"/><path d="M5.6 1 V14.4 H19 L14.2 19.6 H0.8 V6.4 Z" fill="none" opacity="0.9"/><path d="M0.8 6.4 H14.2 V19.6 M14.2 6.4 L19 1" fill="none" stroke="#33465e" stroke-width="1.2"/><path d="M0.8 6.4 L5.6 1 H19 V14.4 L14.2 19.6 H0.8 Z" fill="none" stroke="#33465e" stroke-width="1.3" stroke-linejoin="round"/></g></svg>
<div style="left:1852.2px;top:80px;width:1px;height:27px;background:#c4c6d8"></div>
<svg style="left:1862.6px;top:81px" width="22" height="26" viewBox="0 0 22 26"><path d="M10.6 0.8 L20.6 9.4 V17.6 L10.6 24.8 L0.8 15.4 V7.8 Z" fill="#f7f9fc" stroke="#33465e" stroke-width="1.3" stroke-linejoin="round"/><path d="M10.6 7 L15.6 12 L10.6 17.8 L5.8 12.4 Z" fill="#fff" stroke="#33465e" stroke-width="1.1"/><path d="M10.6 0.8 V7 M0.8 7.8 L5.8 12.4 M0.8 15.4 L5.8 12.4 M10.6 17.8 V24.8 M15.6 12 L20.6 9.4" stroke="#33465e" stroke-width="1"/><path d="M15.6 12 L20.6 9.4 V17.6 L10.6 24.8 V17.8 Z" fill="#51657f" stroke="#33465e" stroke-width="0.9"/></svg>
<svg style="left:1892px;top:91.4px" width="7" height="4" viewBox="0 0 7 4"><path d="M0 0 H6.4 L3.2 3.4 Z" fill="#8a8578"/></svg>
<svg style="left:1904.6px;top:98px" width="10" height="6" viewBox="0 0 10 6"><path d="M0 0 H9.6 L4.8 5.4 Z" fill="#111"/></svg>
<svg style="left:10px;top:130px" width="21" height="23" viewBox="0 0 21 23"><path d="M3.6 2.2 Q3.6 0.6 5.6 0.6 H19.6 Q18 1.4 18 3 V19 Q18 22 15 22 H1 Q3.6 21 3.6 18.6 Z" fill="url(#gp)" stroke="#51657f" stroke-width="1"/><path d="M6.4 5 H15.4 M6.4 7.4 H15.4 M6.4 9.8 H15.4 M6.4 12.2 H15.4 M6.4 14.6 H15.4 M6.4 17 H15.4" stroke="#2a3a4f" stroke-width="1.2"/></svg>
<svg style="left:39.6px;top:138.2px" width="5" height="7" viewBox="0 0 5 7"><path d="M0.4 0.2 V6.4 L4 3.3 Z" fill="#6f86a6"/></svg>
<svg style="left:32.4px;top:157.2px" width="8" height="14" viewBox="0 0 8 14"><path d="M0.5 0.5 V13.5 L7.5 7 Z" fill="#111"/></svg>
<svg style="left:16px;top:196.4px" width="21" height="13" viewBox="0 0 21 13"><rect x="0.6" y="0.4" width="3.6" height="12" rx="1.2" fill="url(#gh)" stroke="#33465e" stroke-width="0.8"/><path d="M6 6.2 L12 0.8 V4 H20 V8.4 H12 V11.6 Z" fill="#3b4f68" stroke="#2a3a4f" stroke-width="0.6" stroke-linejoin="round"/></svg>
<svg style="left:18px;top:230.4px" width="17" height="13" viewBox="0 0 17 13"><path d="M0.6 6.2 L7 0.8 V4 H15.6 V8.4 H7 V11.6 Z" fill="#3b4f68" stroke="#2a3a4f" stroke-width="0.6" stroke-linejoin="round"/></svg>
<svg style="left:16.6px;top:262px" width="17" height="13" viewBox="0 0 17 13"><g transform="translate(16.4 0) scale(-1 1)"><path d="M0.6 6.2 L7 0.8 V4 H15.6 V8.4 H7 V11.6 Z" fill="#3b4f68" stroke="#2a3a4f" stroke-width="0.6" stroke-linejoin="round"/></g></svg>
<svg style="left:16px;top:293.4px" width="21" height="13" viewBox="0 0 21 13"><g transform="translate(20.6 0) scale(-1 1)"><rect x="0.6" y="0.4" width="3.6" height="12" rx="1.2" fill="url(#gh)" stroke="#33465e" stroke-width="0.8"/><path d="M6 6.2 L12 0.8 V4 H20 V8.4 H12 V11.6 Z" fill="#3b4f68" stroke="#2a3a4f" stroke-width="0.6" stroke-linejoin="round"/></g></svg>
<svg style="left:14.4px;top:322px" width="24" height="14" viewBox="0 0 24 14"><path d="M0.4 10.6 H23" stroke="#33465e" stroke-width="1.2"/><rect x="1" y="8" width="5.4" height="5.4" fill="#fff" stroke="#33465e" stroke-width="1.5"/><rect x="9" y="8" width="5.4" height="5.4" fill="#fff" stroke="#33465e" stroke-width="1.5"/><rect x="17" y="8" width="5.4" height="5.4" fill="#fff" stroke="#33465e" stroke-width="1.5"/><path d="M9.6 5.4 Q13.4 -0.6 17.4 4" fill="none" stroke="#d01020" stroke-width="1.4"/><path d="M14.8 4.2 L18.6 6 L18.8 1.6 Z" fill="#d01020"/></svg>
<svg style="left:17.6px;top:350.4px" width="17" height="25" viewBox="0 0 17 25"><rect x="0.8" y="6" width="4.6" height="18" rx="1.6" fill="#fbfcfe" stroke="#33465e" stroke-width="1.2"/><rect x="10" y="6" width="4.6" height="18" rx="1.6" fill="#fbfcfe" stroke="#33465e" stroke-width="1.2"/><rect x="0.8" y="6" width="4.6" height="2.6" fill="#33465e"/><rect x="10" y="6" width="4.6" height="2.6" fill="#33465e"/><path d="M3.4 4.6 Q7.6 -1.4 12 3" fill="none" stroke="#d01020" stroke-width="1.4"/><path d="M9.6 3.4 L13.6 5 L13.4 0.6 Z" fill="#d01020"/></svg>
<svg style="left:17px;top:386px" width="20" height="18" viewBox="0 0 20 18"><path d="M0.8 8 L9 0.8 V5 Q18.6 5 18.6 14 V17.4 H14.2 V14.4 Q14.2 11 9 11 V15.4 Z" fill="url(#gs)" stroke="#2a3a4f" stroke-width="0.8" stroke-linejoin="round"/></svg>
<svg style="left:17px;top:418.6px" width="20" height="18" viewBox="0 0 20 18"><g transform="translate(19.6 0) scale(-1 1)"><path d="M0.8 8 L9 0.8 V5 Q18.6 5 18.6 14 V17.4 H14.2 V14.4 Q14.2 11 9 11 V15.4 Z" fill="url(#gg)" stroke="#8e8e8e" stroke-width="0.8" stroke-linejoin="round"/></g></svg>
<svg style="left:32.4px;top:443px" width="8" height="14" viewBox="0 0 8 14"><path d="M0.5 0.5 V13.5 L7.5 7 Z" fill="#111"/></svg>
<svg style="left:15.4px;top:476.6px" width="22" height="24" viewBox="0 0 22 24"><path d="M4.6 0.6 H15 L19.6 5 V20 H4.6 Z" fill="url(#gp)" stroke="#7d8da3" stroke-width="0.9"/><rect x="0.8" y="9.2" width="14.2" height="13.4" fill="#fbfcfe" stroke="#33465e" stroke-width="1.3"/><path d="M0.8 15.8 H15" stroke="#33465e" stroke-width="1.2"/><rect x="5.6" y="11.4" width="4.6" height="1.8" fill="none" stroke="#33465e" stroke-width="0.9"/><rect x="5.6" y="18" width="4.6" height="1.8" fill="none" stroke="#33465e" stroke-width="0.9"/></svg>
<div style="left:3px;top:508px;width:46px;height:1px;background:#d0d2e0"></div>
<svg style="left:14px;top:517.4px" width="25" height="24" viewBox="0 0 25 24"><rect x="0.6" y="0.6" width="5.6" height="11" fill="url(#gh)" stroke="#33465e" stroke-width="0.7"/><rect x="18" y="0.6" width="5.6" height="11" fill="url(#gh)" stroke="#33465e" stroke-width="0.7"/><path d="M12.2 11.4 V6.6 H10 L12.2 3.4 L14.6 6.6 H12.4" fill="#d01020" stroke="#d01020" stroke-width="1"/><rect x="8.2" y="13" width="8" height="9.6" fill="url(#gr)" stroke="#c00818" stroke-width="0.6"/></svg>
<svg style="left:15.6px;top:552.6px" width="20" height="19" viewBox="0 0 20 19"><path d="M7 4.4 H17.6 L16.8 17.6 H7.8 Z" fill="url(#gc)" stroke="#3b4f68" stroke-width="1.1"/><path d="M6 4.2 H18.6" stroke="#33465e" stroke-width="1.6"/><path d="M10.4 3 Q10.4 0.8 12.4 0.8 Q14.4 0.8 14.4 3" fill="none" stroke="#33465e" stroke-width="1.2"/><path d="M10.6 7 V15.6 M13.8 7 V15.6" stroke="#7d8da3" stroke-width="0.8"/><path d="M0.4 10.6 H11 M5.6 5.6 V15.8 M2 7 L9.4 14.4 M9.4 7 L2 14.4" stroke="#e01020" stroke-width="1.1"/><circle cx="5.7" cy="10.6" r="2" fill="#e01020"/></svg>
<svg style="left:12.6px;top:583.6px" width="27" height="19" viewBox="0 0 27 19"><path d="M0.4 0.6 H9.6 Q7 2.4 7.4 5.4 Q9 7 11.6 4.4 V13.6 Q11.6 17.6 7.6 17.6 H0.4 Z" fill="url(#gv)" stroke="#33465e" stroke-width="0.6"/><path d="M26 0.6 H15.2 Q14 4 15.2 7.4 V13.6 Q15.2 17.6 19 17.6 H26 Z" fill="url(#gv)" stroke="#33465e" stroke-width="0.6"/><path d="M0.4 9 H11.6 V13.6 Q11.6 17.6 7.6 17.6 H0.4 Z M26 9 H15.2 V13.6 Q15.2 17.6 19 17.6 H26 Z" fill="url(#gs)"/><path d="M7 1 Q8 4 10.6 4.4 L11.4 1 Z M14.6 1 H18 Q17 4.4 15.6 5 Z" fill="#2a3a4f"/><path d="M0 8.6 H26.4" stroke="#d40814" stroke-width="1.5"/></svg>
<div style="left:3px;top:612px;width:46px;height:1px;background:#d0d2e0"></div>
<svg style="left:14px;top:620.8px" width="25" height="24" viewBox="0 0 25 24"><circle cx="12.2" cy="11.8" r="11.2" fill="#eeeff5" stroke="#45477f" stroke-width="1.3"/><ellipse cx="12.2" cy="11.8" rx="3.4" ry="11.2" fill="none" stroke="#45477f" stroke-width="0.9"/><ellipse cx="12.2" cy="11.8" rx="7.6" ry="11.2" fill="none" stroke="#45477f" stroke-width="0.9"/><path d="M12.2 0.6 V23 M2.4 6.4 H22 M1 11.8 H23.4 M2.4 17.2 H22" stroke="#45477f" stroke-width="0.9"/></svg>
<svg style="left:14.4px;top:653px" width="24" height="22" viewBox="0 0 24 22"><rect x="0.8" y="5.6" width="22" height="15.4" fill="#f4f4f8" stroke="#3a3c78" stroke-width="1.5"/><path d="M12 0.4 V11 M6.8 5.6 H17.4 M8.4 2 L15.8 9.4 M15.8 2 L8.4 9.4" stroke="#e01020" stroke-width="1"/><circle cx="12.1" cy="5.7" r="2.2" fill="#fff" stroke="#e01020" stroke-width="1.2"/></svg>
<svg style="left:14.4px;top:691.4px" width="24" height="8" viewBox="0 0 24 8"><path d="M0.2 3.6 H23.4" stroke="#33465e" stroke-width="1.2"/><rect x="9.6" y="1.2" width="4.8" height="4.8" fill="#fbfcfe" stroke="#33465e" stroke-width="1.2"/></svg>
<div class="t" style="top:699.72px;left:19px;font-size:8.6px;color:#c81020;font-weight:bold;letter-spacing:-0.2px">10+</div>
<svg style="left:13.6px;top:720.8px" width="25" height="18" viewBox="0 0 25 18"><rect x="0.8" y="1" width="4.6" height="4.6" fill="#fff" stroke="#d01020" stroke-width="1.2"/><rect x="18" y="1" width="4.6" height="4.6" fill="#fff" stroke="#d01020" stroke-width="1.2"/><path d="M6.6 3.4 H17" stroke="#d01020" stroke-width="1.2" stroke-dasharray="2 1.4"/><rect x="0.6" y="9.6" width="22.6" height="6.6" fill="#f4f7fb" stroke="#33465e" stroke-width="1.1"/><rect x="0.6" y="13.6" width="22.6" height="2.8" fill="#33465e"/><path d="M2.6 10 V12.6 M5 10 V11.8 M7.4 10 V12.6 M9.8 10 V11.8 M12.2 10 V12.6 M14.6 10 V11.8 M17 10 V12.6 M19.4 10 V11.8 M21.6 10 V12.6" stroke="#33465e" stroke-width="0.8"/></svg>
<svg style="left:13px;top:748px" width="26" height="26" viewBox="0 0 26 26"><rect x="0.7" y="0.7" width="24.6" height="24.4" fill="#fff" stroke="#c8000e" stroke-width="1.4"/><rect x="0" y="0" width="26" height="4.6" fill="#c8000e"/><path d="M3.4 8 V22 M22.6 8 V22 M5.6 9 V21 M20.4 9 V21" stroke="#c8000e" stroke-width="1"/><path d="M5.6 10 L13 15 L5.6 20.4 Z M20.4 10 L13 15 L20.4 20.4 Z" fill="none" stroke="#c8000e" stroke-width="1"/><path d="M13 15 V8.6 M9.6 8 H16.4 M10.6 10 H15.4" stroke="#c8000e" stroke-width="1.4"/><path d="M8 12 V18.4 M18 12 V18.4" stroke="#c8000e" stroke-width="0.8"/></svg>
<svg style="left:13px;top:780px" width="26" height="26" viewBox="0 0 26 26"><rect x="0.7" y="0.7" width="24.6" height="24.4" fill="#fff" stroke="#c8000e" stroke-width="1.4"/><rect x="0" y="0" width="26" height="4.6" fill="#c8000e"/><path d="M2.8 6 V24 M4.6 6 V24 M6.4 6 V24 M19.6 6 V24 M21.4 6 V24 M23.2 6 V24" stroke="#c8000e" stroke-width="0.8"/><path d="M6.4 15 L11.4 8.6 V21.4 Z M19.6 15 L14.6 8.6 V21.4 Z" fill="none" stroke="#c8000e" stroke-width="1"/><path d="M11.4 8 V22 M14.6 8 V22 M13 7 V23" stroke="#c8000e" stroke-width="1.1"/></svg>
<svg style="left:13px;top:812px" width="26" height="26" viewBox="0 0 26 26"><rect x="0.7" y="0.7" width="24.6" height="24.4" fill="#fff" stroke="#c8000e" stroke-width="1.4"/><rect x="0" y="0" width="26" height="4.6" fill="#c8000e"/><path d="M8.4 20.6 H17.6" stroke="#c8000e" stroke-width="1.5"/></svg>
<div class="t" style="top:818.13px;left:21.6px;font-size:14.5px;color:#c8000e;font-weight:bold">a</div>
<svg style="left:13px;top:844px" width="26" height="26" viewBox="0 0 26 26"><rect x="0.7" y="0.7" width="24.6" height="24.4" fill="#fff" stroke="#c8000e" stroke-width="1.4"/><rect x="0" y="0" width="26" height="4.6" fill="#c8000e"/><rect x="4.6" y="7" width="16.8" height="12.6" rx="3" fill="none" stroke="#c8000e" stroke-width="1"/><path d="M4.6 9.6 H21.4 M4.6 11.8 H21.4 M4.6 14 H21.4 M4.6 16.2 H21.4 M6.4 18.4 H19.6" stroke="#c8000e" stroke-width="1.3"/><path d="M3.4 20.6 H22.6" stroke="#c8000e" stroke-width="1.1"/><path d="M11 21 H15 L13 23.2 Z" fill="#c8000e"/></svg>
<svg style="left:14.4px;top:879.6px" width="24" height="20" viewBox="0 0 24 20"><path d="M0.4 0.6 H23 V8.6 H15.2 V19.2 H8.2 V8.6 H0.4 Z" fill="#cc000e"/><path d="M0.4 5.4 H23 M11.7 5.4 V19.2" stroke="#f1f1f3" stroke-width="1.3"/></svg>
<svg style="left:1881px;top:128px" width="26" height="25" viewBox="0 0 26 25"><path d="M8.8 8.2 L14.8 5.4 L20.6 8.2 V15.6 L14.6 18.6 L8.8 15.6 Z" fill="#fbfcfe" stroke="#33465e" stroke-width="1"/><path d="M14.6 11 L20.6 8.2 V15.6 L14.6 18.6 Z" fill="#51657f"/><path d="M8.8 8.2 L14.6 11 L20.6 8.2 L14.8 5.4 Z" fill="#c9d4e3" stroke="#33465e" stroke-width="0.7"/><path d="M7.6 1.6 Q3 4.6 4.6 9.6" fill="none" stroke="#d01020" stroke-width="1.3"/><path d="M1.6 8 L5 12 L6.8 7.4 Z" fill="#d01020"/><path d="M21.6 2.4 Q25.6 6.4 22.4 10.4" fill="none" stroke="#d01020" stroke-width="1.3"/><path d="M19 2.6 L23.6 0.6 L23.4 5 Z" fill="#d01020"/><path d="M10.4 20 Q13.6 23.6 17.6 21.4" fill="none" stroke="#d01020" stroke-width="1.3"/><path d="M15.6 18.4 L20 19.4 L17.4 23.4 Z" fill="#d01020"/></svg>
<svg style="left:1881px;top:164.6px" width="24" height="14" viewBox="0 0 24 14"><rect x="1" y="8" width="5" height="5" fill="#fff" stroke="#33465e" stroke-width="1.6"/><rect x="9" y="8" width="5" height="5" fill="#fff" stroke="#33465e" stroke-width="1.6"/><rect x="17" y="8" width="5" height="5" fill="#fff" stroke="#d01020" stroke-width="1.6"/><path d="M0.4 14.2 H22" stroke="#8da0b8" stroke-width="0.7"/><path d="M11.6 5.2 Q14.4 0.2 18 3.4" fill="none" stroke="#d01020" stroke-width="1.4"/><path d="M15.6 4 L19.6 5.4 L19.4 1 Z" fill="#d01020"/></svg>
<svg style="left:1881px;top:202px" width="24" height="8" viewBox="0 0 24 8"><rect x="1" y="1" width="5" height="5" fill="#fff" stroke="#33465e" stroke-width="1.6"/><rect x="17.4" y="1" width="5" height="5" fill="#fff" stroke="#33465e" stroke-width="1.6"/><path d="M9.2 1 L14.4 6 M14.4 1 L9.2 6" stroke="#d01020" stroke-width="1.8"/><path d="M6.4 3.6 H8.6 M15 3.6 H17" stroke="#33465e" stroke-width="1.2"/></svg>
<svg style="left:1882.4px;top:229px" width="24" height="8" viewBox="0 0 24 8"><path d="M0.2 3.6 H23.4" stroke="#33465e" stroke-width="1.2"/><rect x="9.4" y="1.2" width="4.8" height="4.8" fill="#fbfcfe" stroke="#33465e" stroke-width="1.2"/></svg>
<div class="t" style="top:238.81px;left:1884px;font-size:6.6px;color:#33465e;font-weight:bold;letter-spacing:-0.3px">10</div>
<div class="t" style="top:238.92px;left:1893.4px;font-size:8.6px;color:#d01020;font-weight:bold;letter-spacing:-0.2px">20</div>
<svg style="left:1883px;top:257.6px" width="23" height="24" viewBox="0 0 23 24"><rect x="8.6" y="1" width="5" height="5" fill="#fff" stroke="#33465e" stroke-width="1.6"/><rect x="8.6" y="9" width="5" height="5" fill="#fff" stroke="#33465e" stroke-width="1.6"/><rect x="8.6" y="17" width="5" height="5" fill="#fff" stroke="#33465e" stroke-width="1.6"/><path d="M4.6 6.4 Q0.6 13 3.6 20" fill="none" stroke="#d01020" stroke-width="1.6"/><path d="M1.4 18 L5 23 L6.6 17.6 Z" fill="#d01020"/><path d="M17 3 Q20.6 7.6 17.6 12" fill="none" stroke="#d01020" stroke-width="1.5"/><path d="M15 4.6 L17.4 0.6 L20 4.4 Z" fill="#d01020"/></svg>
<svg style="left:1881px;top:287.6px" width="26" height="26" viewBox="0 0 26 26"><rect x="0.8" y="0.8" width="6.8" height="6.8" fill="#a3b0c4" stroke="#51657f" stroke-width="1.2"/><rect x="11.4" y="0.8" width="6.8" height="6.8" fill="#f4f7fb" stroke="#33465e" stroke-width="1.5"/><rect x="10.8" y="12" width="13.6" height="12.6" fill="none" stroke="#c8101c" stroke-width="1.6" stroke-dasharray="2.2 1.4"/><path d="M2.8 10.4 V16.4 L6 18.6" fill="none" stroke="#d01020" stroke-width="1.6"/><path d="M3.6 20.4 L8.4 20 L6.4 15.6 Z" fill="#d01020"/></svg>
<svg style="left:1900.8px;top:317.2px" width="8" height="14" viewBox="0 0 8 14"><path d="M0.5 0.5 V13.5 L7.5 7 Z" fill="#111"/></svg>
<svg style="left:1882.4px;top:355px" width="23" height="16" viewBox="0 0 23 16"><path d="M7.6 4 V1.6 Q7.6 0.8 8.6 0.8 H14 Q15 0.8 15 1.6 V4" fill="none" stroke="#33465e" stroke-width="1.4"/><rect x="0.7" y="4" width="21.4" height="11.2" rx="1.4" fill="url(#gv)" stroke="#33465e" stroke-width="1.1"/><path d="M0.8 9.4 H22" stroke="#33465e" stroke-width="1"/><rect x="9" y="8" width="4.8" height="2.8" fill="#f4f7fb" stroke="#33465e" stroke-width="0.8"/></svg>
<svg style="left:1883.4px;top:383px" width="21" height="24" viewBox="0 0 21 24"><path d="M2.6 0.8 H18 Q19.8 0.8 19.8 2.6 V12.4 Q19.8 14.2 18 14.2 H13 L8.4 18.4 L9 14.2 H2.6 Q0.8 14.2 0.8 12.4 V2.6 Q0.8 0.8 2.6 0.8 Z" fill="#fbfcfe" stroke="#6b7f99" stroke-width="1"/><path d="M5.6 4 H16.4 M5.6 6.6 H16.4 M5.6 9.2 H14.6 M5.6 11.6 H15.6" stroke="#7ea0d0" stroke-width="0.9"/><path d="M3 4 H4.4 M3 6.6 H4.4 M3 9.2 H4.4" stroke="#33465e" stroke-width="0.9"/><rect x="0.6" y="18.8" width="19.8" height="3.8" rx="1.9" fill="#fbfcfe" stroke="#33465e" stroke-width="1.2"/></svg>
<div style="left:1871px;top:414px;width:43px;height:1px;background:#d0d2e0"></div>
<svg style="left:1876.6px;top:427.4px" width="24" height="18" viewBox="0 0 24 18"><rect x="0.6" y="3.4" width="22.6" height="10" rx="2" fill="url(#gv)" stroke="#51657f" stroke-width="0.7"/><path d="M4.4 1 Q12 -0.2 19.6 1 Q21 8 19.6 15.6 Q12 17 4.4 15.6 Q3 8 4.4 1 Z" fill="url(#gr)"/><path d="M4.4 1 Q12 -0.2 19.6 1 Q21 8 19.6 15.6 Q12 17 4.4 15.6 Q3 8 4.4 1 Z" fill="#d8101c" opacity="0.55"/><path d="M7 1 V15.6 M9.6 0.8 V16 M12 0.8 V16 M14.6 0.8 V16 M17 1 V15.6" stroke="#f07a80" stroke-width="0.6"/><circle cx="22.2" cy="8.4" r="1" fill="#c8101c"/></svg>
<svg style="left:1906.6px;top:432px" width="5" height="7" viewBox="0 0 5 7"><path d="M4.4 0.2 V6.4 L0.6 3.3 Z" fill="#8d8270"/></svg>
<div style="left:1871px;top:454px;width:43px;height:1px;background:#d0d2e0"></div>
<svg style="left:1884px;top:461.4px" width="21" height="25" viewBox="0 0 21 25"><circle cx="5.4" cy="10" r="4.6" fill="#8da0b8" stroke="#51657f" stroke-width="0.9"/><circle cx="5.4" cy="10" r="2.6" fill="#33465e"/><rect x="12.6" y="0.6" width="6.4" height="23" fill="url(#gp)" stroke="#33465e" stroke-width="1.1"/><path d="M13.2 3.0 H16.6" stroke="#33465e" stroke-width="0.9"/><path d="M13.2 5.3 H15.399999999999999" stroke="#33465e" stroke-width="0.9"/><path d="M13.2 7.6 H16.6" stroke="#33465e" stroke-width="0.9"/><path d="M13.2 9.899999999999999 H15.399999999999999" stroke="#33465e" stroke-width="0.9"/><path d="M13.2 12.2 H16.6" stroke="#33465e" stroke-width="0.9"/><path d="M13.2 14.5 H15.399999999999999" stroke="#33465e" stroke-width="0.9"/><path d="M13.2 16.799999999999997 H16.6" stroke="#33465e" stroke-width="0.9"/><path d="M13.2 19.099999999999998 H15.399999999999999" stroke="#33465e" stroke-width="0.9"/><path d="M13.2 21.4 H16.6" stroke="#33465e" stroke-width="0.9"/></svg>
<svg style="left:1884px;top:493.6px" width="21" height="25" viewBox="0 0 21 25"><rect x="0.6" y="5" width="8.4" height="8.4" rx="3" fill="#8da0b8" stroke="#51657f" stroke-width="0.9"/><rect x="2.6" y="7" width="4.4" height="4.4" rx="1" fill="#51657f"/><rect x="13" y="0.6" width="6.4" height="23" fill="url(#gp)" stroke="#33465e" stroke-width="1.1"/><path d="M13.6 3.0 H17" stroke="#33465e" stroke-width="0.9"/><path d="M13.6 5.3 H15.8" stroke="#33465e" stroke-width="0.9"/><path d="M13.6 7.6 H17" stroke="#33465e" stroke-width="0.9"/><path d="M13.6 9.899999999999999 H15.8" stroke="#33465e" stroke-width="0.9"/><path d="M13.6 12.2 H17" stroke="#33465e" stroke-width="0.9"/><path d="M13.6 14.5 H15.8" stroke="#33465e" stroke-width="0.9"/><path d="M13.6 16.799999999999997 H17" stroke="#33465e" stroke-width="0.9"/><path d="M13.6 19.099999999999998 H15.8" stroke="#33465e" stroke-width="0.9"/><path d="M13.6 21.4 H17" stroke="#33465e" stroke-width="0.9"/><path d="M8.6 9 H13 M10.6 5 H19.4 V12.6 H10.6 Z" fill="#fff" stroke="#33465e" stroke-width="1.3"/><path d="M12.6 6.6 H17.6 V10.8 H12.6 Z" fill="#fbfcfe"/></svg>
<svg style="left:1883.6px;top:526.4px" width="24" height="26" viewBox="0 0 24 26"><path d="M7 9.4 H17.6 Q23.2 9.4 23.2 17 Q23.2 24.6 17.6 24.6 H7 Z" fill="url(#gd)"/><path d="M7 9.4 H17.6 Q23.2 9.4 23.2 17 Q23.2 24.6 17.6 24.6 H7 Z" fill="#0e1822" opacity="0.45"/><ellipse cx="7" cy="17" rx="5.8" ry="7.6" fill="#14202c" stroke="#0e1822" stroke-width="0.6"/><ellipse cx="7" cy="17" rx="4.2" ry="5.8" fill="none" stroke="#18c8e8" stroke-width="2"/><ellipse cx="7.4" cy="17" rx="1.8" ry="2.8" fill="#0a1016"/><path d="M5 0.8 H12.6 L8.8 8 Z" fill="#e81020"/><path d="M8.8 2 V5" stroke="#fff" stroke-width="1.3"/><circle cx="8.8" cy="6.4" r="0.7" fill="#fff"/></svg>
<div style="left:1871px;top:558px;width:43px;height:1px;background:#d0d2e0"></div>
<svg style="left:1883px;top:570.6px" width="22" height="18" viewBox="0 0 22 18"><rect x="2.6" y="0.6" width="16.4" height="5" fill="#e45860" stroke="#d01828" stroke-width="0.7"/><path d="M4.4 5.6 V10 M10.8 5.6 V10 M17.2 5.6 V10" stroke="#d01020" stroke-width="1.5"/><path d="M2.2 8.6 L4.4 11.8 L6.6 8.6 Z M8.6 8.6 L10.8 11.8 L13 8.6 Z M15 8.6 L17.2 11.8 L19.4 8.6 Z" fill="#d01020"/><rect x="0.7" y="12.6" width="20.4" height="4.4" rx="2.2" fill="#fbfcfe" stroke="#33465e" stroke-width="1.2"/><ellipse cx="2.8" cy="14.8" rx="1.2" ry="1.8" fill="#51657f"/></svg>
<svg style="left:1881px;top:600.4px" width="26" height="23" viewBox="0 0 26 23"><path d="M3.6 3 H12 M9.4 0.8 L12.4 3 L9.4 5.2 M10.6 7.6 H19 M16.4 5.4 L19.4 7.6 L16.4 9.8" fill="none" stroke="#8a8a8a" stroke-width="1.2"/><path d="M0.8 12.6 Q5.6 6.4 11.6 11 Q17.6 15.8 24.6 10 V22.4 H0.8 Z" fill="url(#gg)" stroke="#b4b4b4" stroke-width="0.8"/><path d="M0.8 12.6 Q5.6 6.4 11.6 11 Q17.6 15.8 24.6 10" fill="none" stroke="#8e8e8e" stroke-width="0.9"/></svg>
<div style="left:1871px;top:630px;width:43px;height:1px;background:#d0d2e0"></div>
<svg style="left:1883.4px;top:641px" width="9" height="22" viewBox="0 0 9 22"><path d="M2.6 1.8 Q2.6 0.6 4.2 0.6 Q5.8 0.6 5.8 1.8 V14 Q8 15.4 8 17.8 Q8 21.2 4.2 21.2 Q0.6 21.2 0.6 17.8 Q0.6 15.4 2.6 14 Z" fill="#fbfcfe" stroke="#5a5f6a" stroke-width="0.9"/><circle cx="4.2" cy="17.8" r="2.8" fill="#d00c18"/><rect x="3.2" y="7" width="2" height="10" fill="#d00c18"/></svg>
<svg style="left:1906.6px;top:648px" width="5" height="7" viewBox="0 0 5 7"><path d="M4.4 0.2 V6.4 L0.6 3.3 Z" fill="#8d8270"/></svg>
<svg style="left:1878.6px;top:674.4px" width="20" height="20" viewBox="0 0 20 20"><circle cx="9.6" cy="9.6" r="8.8" fill="#fbfcfe" stroke="#51657f" stroke-width="1.5"/><path d="M9.6 2.4 V4.4 M3.4 6 L5 7 M2.4 10.6 H4.4 M15.8 6 L14.2 7 M4 15 L5.4 13.8" stroke="#7d8da3" stroke-width="0.9"/><path d="M9.2 10.4 L14.6 4.4" stroke="#d00c18" stroke-width="1.8"/><circle cx="9.2" cy="10.4" r="1.4" fill="#51657f"/><path d="M5 17.4 H14.4" stroke="#51657f" stroke-width="1.2"/></svg>
<svg style="left:1906.6px;top:679.6px" width="5" height="7" viewBox="0 0 5 7"><path d="M4.4 0.2 V6.4 L0.6 3.3 Z" fill="#8d8270"/></svg>
<div style="left:1871px;top:702px;width:43px;height:1px;background:#d0d2e0"></div>
<svg style="left:1882px;top:711.6px" width="25" height="24" viewBox="0 0 25 24"><path d="M1 0.6 H8.4 L4.8 7.6 Z" fill="#e81020"/><path d="M4.8 1.8 V4.6" stroke="#fff" stroke-width="1.2"/><circle cx="4.8" cy="5.8" r="0.6" fill="#fff"/><path d="M10 9 H19.6 Q24.4 9 24.4 16 Q24.4 23 19.6 23 H10 Z" fill="url(#gr)"/><path d="M10 9 H19.6 Q24.4 9 24.4 13 H10 Z" fill="#e06a28" opacity="0.85"/><path d="M12 9.2 V13 M15 9.2 V13 M18 9.2 V13 M21 9.4 V13 M10 11 H24" stroke="#8a2a08" stroke-width="0.5"/><ellipse cx="10.6" cy="16" rx="4.6" ry="7" fill="#3a4452" stroke="#2a323e" stroke-width="0.7"/><ellipse cx="10.8" cy="16" rx="2.8" ry="4.8" fill="#b00c16"/><ellipse cx="11" cy="16" rx="1.5" ry="3" fill="#5a0008"/></svg>
<div class="t" style="top:737.79px;left:1880.2px;font-size:17.5px;color:#33465e;">ρ</div>
<svg style="left:1886.6px;top:751.6px" width="22" height="16" viewBox="0 0 22 16"><path d="M6 1 H15.6 Q20.6 1 20.6 7.6 Q20.6 14.2 15.6 14.2 H6 Z" fill="url(#gv)" stroke="#51657f" stroke-width="0.6"/><ellipse cx="6" cy="7.6" rx="4.8" ry="6.6" fill="#51657f" stroke="#33465e" stroke-width="0.7"/><ellipse cx="6.2" cy="7.6" rx="2.8" ry="4.4" fill="#a3b0c4"/></svg>
<div class="t" style="top:769.99px;left:1880.2px;font-size:17.5px;color:#33465e;">ρ</div>
<svg style="left:1884px;top:779px" width="24" height="20" viewBox="0 0 24 20"><path d="M1 8.4 Q6 3.6 11.6 6 Q17.6 8.6 22.6 3.6 L21.6 13.4 Q16.6 18 11 15.6 Q5.4 13.2 1.6 17.6 Z" fill="#9adcf0" stroke="#3a8ab0" stroke-width="0.6"/><path d="M1.2 10.6 Q6 6 11.6 8.6 Q17.4 11 22.4 6.4 M1.4 13.4 Q6 8.8 11.4 11.4 Q17 14 22 9.4 M1.4 15.8 Q5.6 11.4 11.2 13.8 Q16.8 16.4 21.8 11.8" fill="none" stroke="#e4f6fc" stroke-width="1"/><path d="M1.6 17.6 Q5.4 13.2 11 15.6 Q16.6 18 21.6 13.4" fill="none" stroke="#2a6a8e" stroke-width="1"/></svg>
<div class="t" style="top:802.59px;left:1874.2px;font-size:17.5px;color:#33465e;">ρ</div>
<svg style="left:1879.6px;top:816px" width="22" height="16" viewBox="0 0 22 16"><path d="M6 1 H15.6 Q20.6 1 20.6 7.6 Q20.6 14.2 15.6 14.2 H6 Z" fill="url(#gd)" stroke="#51657f" stroke-width="0.6"/><ellipse cx="6" cy="7.6" rx="4.8" ry="6.6" fill="#14202c" stroke="#33465e" stroke-width="0.7"/><ellipse cx="6.2" cy="7.6" rx="2.8" ry="4.4" fill="#0a1016"/><ellipse cx="6.2" cy="7.6" rx="3.4" ry="5" fill="none" stroke="#18c8e8" stroke-width="1.7"/></svg>
<svg style="left:1906.6px;top:815.6px" width="5" height="7" viewBox="0 0 5 7"><path d="M4.4 0.2 V6.4 L0.6 3.3 Z" fill="#8d8270"/></svg>
<svg style="left:1882.4px;top:904.4px" width="22" height="22" viewBox="0 0 22 22"><rect x="0.9" y="0.9" width="20" height="20" fill="#f4f7fb" stroke="#33465e" stroke-width="1.8"/><path d="M10.9 0.9 V20.9 M0.9 10.9 H20.9" stroke="#33465e" stroke-width="1.8"/></svg>
<svg style="left:599px;top:955px" width="26" height="26" viewBox="0 0 26 26"><rect x="0.7" y="0.7" width="24.6" height="24.4" fill="#fff" stroke="#34495e" stroke-width="1.4"/><rect x="0" y="0" width="26" height="5.6" fill="#34495e"/><path d="M1.4 11.6 H24.6" stroke="#d01020" stroke-width="1.2"/><rect x="11" y="9.4" width="4.4" height="4.4" fill="#fff" stroke="#d01020" stroke-width="1.1"/></svg>
<div class="t" style="top:970.74px;left:608.6px;font-size:7.4px;color:#d01020;font-weight:bold;letter-spacing:-0.2px">10</div>
<svg style="left:631px;top:955px" width="26" height="26" viewBox="0 0 26 26"><rect x="0.7" y="0.7" width="24.6" height="24.4" fill="#fff" stroke="#34495e" stroke-width="1.4"/><rect x="0" y="0" width="26" height="5.6" fill="#34495e"/><path d="M13.4 10 L19.6 20.6 H6.6 Z" fill="none" stroke="#d01020" stroke-width="1.6" stroke-linejoin="round"/><path d="M5.6 21.4 H20.6" stroke="#e88a90" stroke-width="0.7"/></svg>
<svg style="left:663px;top:955px" width="26" height="26" viewBox="0 0 26 26"><rect x="0.7" y="0.7" width="24.6" height="24.4" fill="#fff" stroke="#34495e" stroke-width="1.4"/><rect x="0" y="0" width="26" height="5.6" fill="#34495e"/><circle cx="9" cy="14.6" r="4.6" fill="none" stroke="#d01020" stroke-width="0.9"/><circle cx="9" cy="14.6" r="2.6" fill="#d01020"/><rect x="17" y="6.8" width="4.6" height="16" fill="none" stroke="#d01020" stroke-width="1"/><path d="M17 10 H21.6 M17 13.2 H21.6 M17 16.4 H21.6 M17 19.6 H21.6" stroke="#d01020" stroke-width="0.9"/></svg>
<svg style="left:695px;top:955px" width="26" height="26" viewBox="0 0 26 26"><rect x="0.7" y="0.7" width="24.6" height="24.4" fill="#fff" stroke="#34495e" stroke-width="1.4"/><rect x="0" y="0" width="26" height="5.6" fill="#34495e"/><path d="M6.4 7 Q6.4 6 7.4 6 Q8.4 6 8.4 7 V16.6 Q10.4 17.6 10.4 19.6 Q10.4 22.6 7.4 22.6 Q4.4 22.6 4.4 19.6 Q4.4 17.6 6.4 16.6 Z" fill="#d01020"/><path d="M7.4 7 V12" stroke="#fff" stroke-width="0.8"/><circle cx="17.6" cy="14.6" r="4.6" fill="none" stroke="#d01020" stroke-width="1" stroke-dasharray="2.4 1"/><path d="M17.4 15 L20 12" stroke="#d01020" stroke-width="1.1"/><path d="M15 20.4 H20.4 M17.6 19.2 V20.4" stroke="#d01020" stroke-width="1"/></svg>
<svg style="left:727px;top:955px" width="26" height="26" viewBox="0 0 26 26"><rect x="0.7" y="0.7" width="24.6" height="24.4" fill="#fff" stroke="#34495e" stroke-width="1.4"/><rect x="0" y="0" width="26" height="5.6" fill="#34495e"/><path d="M9.6 11 V9.2 Q9.6 8.4 10.4 8.4 H15.6 Q16.4 8.4 16.4 9.2 V11" fill="none" stroke="#d01020" stroke-width="1.2"/><rect x="4" y="11" width="18" height="10.4" rx="1" fill="none" stroke="#d01020" stroke-width="1.3"/><path d="M4 15.4 H22 M4 18.8 H22" stroke="#d01020" stroke-width="0.8"/><rect x="11.4" y="14.2" width="3.4" height="2.4" fill="#fff" stroke="#d01020" stroke-width="0.8"/></svg>
<svg style="left:759px;top:955px" width="26" height="26" viewBox="0 0 26 26"><rect x="0.7" y="0.7" width="24.6" height="24.4" fill="#fff" stroke="#34495e" stroke-width="1.4"/><rect x="0" y="0" width="26" height="5.6" fill="#34495e"/></svg>
<div class="t" style="top:964.9px;left:767.4px;font-size:15px;color:#d01020;font-weight:bold;font-family:'Liberation Serif',serif">E</div>
<svg style="left:791px;top:955px" width="26" height="26" viewBox="0 0 26 26"><rect x="0.7" y="0.7" width="24.6" height="24.4" fill="#fff" stroke="#34495e" stroke-width="1.4"/><rect x="0" y="0" width="26" height="5.6" fill="#34495e"/></svg>
<div class="t" style="top:965.24px;left:794px;font-size:12px;color:#d01020;font-weight:bold;font-family:'Liberation Serif',serif;letter-spacing:-0.4px">Rho</div>
<svg style="left:823px;top:955px" width="26" height="26" viewBox="0 0 26 26"><rect x="0.7" y="0.7" width="24.6" height="24.4" fill="#fff" stroke="#34495e" stroke-width="1.4"/><rect x="0" y="0" width="26" height="5.6" fill="#34495e"/><path d="M5 9 H14 M11.6 6.6 L14.6 9 L11.6 11.4 M12 14.4 H21 M18.6 12 L21.6 14.4 L18.6 16.8" fill="none" stroke="#d01020" stroke-width="1.5"/><path d="M3 21.6 Q6 14.4 11 17.4 Q15.6 21.6 22.6 18.6 Q20 22.6 14 22.4" fill="none" stroke="#d01020" stroke-width="1.3"/></svg>
<svg style="left:853.4px;top:973.2px" width="10" height="6" viewBox="0 0 10 6"><path d="M0 0 H9.6 L4.8 5.4 Z" fill="#111"/></svg>
<div style="left:897px;top:952.2px;width:46px;height:31.6px;background:#c9ddf5;border:1.5px solid #3393f3"></div>
<svg style="left:904px;top:958px" width="20" height="20" viewBox="0 0 20 20"><path d="M11.4 0.8 H18.6 V8 Q18.6 18.6 8 18.6 H0.8 V11.6 H8 Q11.4 11.6 11.4 8 Z" fill="#fbfcfe" stroke="#33465e" stroke-width="1.4" stroke-linejoin="round"/><path d="M1.6 18 H8 Q18 18 18 8" fill="none" stroke="#8da0b8" stroke-width="0.9"/></svg>
<svg style="left:932.2px;top:966.4px" width="7" height="4" viewBox="0 0 7 4"><path d="M0 3.6 H6.4 L3.2 0.2 Z" fill="#8a7a6a"/></svg>
<svg style="left:948px;top:958.4px" width="24" height="19" viewBox="0 0 24 19"><path d="M0.8 5.6 H3 V7.6 H6 L8 6 H15.6 L17.6 7.6 H20.4 V5.6 H22.6 V17.6 H20.4 V15.6 H17.6 L15.6 17 H8 L6 15.6 H3 V17.6 H0.8 Z" fill="#fbfcfe" stroke="#33465e" stroke-width="1.2" stroke-linejoin="round"/><path d="M11.8 6 V3 M8.8 2.2 H14.8" stroke="#33465e" stroke-width="1.5"/><path d="M9.6 8.6 L14 14.6 M14 8.6 L9.6 14.6" stroke="#33465e" stroke-width="0.9"/></svg>
<svg style="left:978.4px;top:966.4px" width="7" height="4" viewBox="0 0 7 4"><path d="M0 3.6 H6.4 L3.2 0.2 Z" fill="#8a7a6a"/></svg>
<svg style="left:992.6px;top:957.6px" width="26" height="22" viewBox="0 0 26 22"><path d="M1 0.4 V21 M24.6 0.4 V21 M4.4 1.4 V20 M21.2 1.4 V20" stroke="#33465e" stroke-width="1.2"/><path d="M4.4 3.6 L12.8 10.6 L4.4 17.8 Z M21.2 3.6 L12.8 10.6 L21.2 17.8 Z" fill="#fbfcfe" stroke="#33465e" stroke-width="1.2"/><path d="M4.4 10.6 H21.2 M8.8 7 V14.4 M16.8 7 V14.4 M12.8 2.6 V18.6" stroke="#33465e" stroke-width="0.9"/><path d="M8 4 L12.8 2 L17.6 4 M8 17.4 L12.8 19.4 L17.6 17.4" fill="none" stroke="#33465e" stroke-width="0.9"/></svg>
<svg style="left:1024px;top:966.4px" width="7" height="4" viewBox="0 0 7 4"><path d="M0 3.6 H6.4 L3.2 0.2 Z" fill="#8a7a6a"/></svg>
<svg style="left:1042px;top:959.4px" width="21" height="19" viewBox="0 0 21 19"><path d="M1 1 L17 5.6 V12.4 L1 17 Z" fill="#fbfcfe" stroke="#33465e" stroke-width="1.3" stroke-linejoin="round"/><path d="M17 5.6 H19.6 V12.4 H17" fill="#8da0b8" stroke="#33465e" stroke-width="1"/><path d="M3.4 1.8 V16.4" stroke="#33465e" stroke-width="0.9"/></svg>
<svg style="left:1069.8px;top:966.4px" width="7" height="4" viewBox="0 0 7 4"><path d="M0 3.6 H6.4 L3.2 0.2 Z" fill="#8a7a6a"/></svg>
<svg style="left:1085px;top:959px" width="25" height="19" viewBox="0 0 25 19"><path d="M0.8 1.8 Q0.8 0.8 1.8 0.8 H22.4 Q23.4 0.8 23.4 1.8 V7.4 Q23.4 8.4 22.4 8.4 H16 V17.8 H8.2 V8.4 H1.8 Q0.8 8.4 0.8 7.4 Z" fill="#fbfcfe" stroke="#33465e" stroke-width="1.4"/><path d="M2 6.6 H10 Q11.4 6.6 11.4 8 V17" fill="none" stroke="#8da0b8" stroke-width="0.9"/></svg>
<div style="left:1116.4px;top:956px;width:1px;height:27px;background:#c4c6d8"></div>
<svg style="left:1126.4px;top:959.6px" width="22" height="17" viewBox="0 0 22 17"><path d="M10.6 0.8 L20.4 9.4 H0.8 Z" fill="#fbfcfe" stroke="#33465e" stroke-width="1.2" stroke-linejoin="round"/><path d="M3.6 10.6 L1 15.6 M7.8 10.6 L5.2 15.6 M12 10.6 L9.4 15.6 M16.2 10.6 L13.6 15.6 M20 10.6 L17.6 15.6" stroke="#33465e" stroke-width="1.2"/></svg>
<svg style="left:1158.4px;top:956.6px" width="24" height="23" viewBox="0 0 24 23"><rect x="1" y="2.6" width="21.4" height="16.2" rx="1" fill="#b9c6d8" stroke="#33465e" stroke-width="1.3"/><rect x="0.6" y="1.6" width="22.2" height="2.6" fill="#33465e"/><path d="M0.8 0.2 V3 M22.6 0.2 V3" stroke="#33465e" stroke-width="1.2"/><rect x="4.6" y="6" width="14.2" height="10.6" fill="#f4f7fb" stroke="#33465e" stroke-width="0.8"/><path d="M4.8 8 H18.6 M4.8 10.2 H18.6 M4.8 12.4 H18.6 M4.8 14.6 H18.6" stroke="#33465e" stroke-width="1.1"/><path d="M9.6 19.4 H13.8 L11.7 21.8 Z" fill="#33465e"/></svg>
<svg style="left:1188px;top:966.4px" width="7" height="4" viewBox="0 0 7 4"><path d="M0 3.6 H6.4 L3.2 0.2 Z" fill="#8a7a6a"/></svg>
<svg style="left:1205.4px;top:958.6px" width="20" height="19" viewBox="0 0 20 19"><rect x="0.8" y="0.8" width="4.6" height="17" fill="#fbfcfe" stroke="#33465e" stroke-width="1.3"/><rect x="5.4" y="4" width="13.2" height="10.4" fill="#fbfcfe" stroke="#33465e" stroke-width="1.3"/><path d="M5.4 9.2 H18.6" stroke="#33465e" stroke-width="1"/></svg>
<svg style="left:1238px;top:958.2px" width="19" height="18" viewBox="0 0 19 18"><path d="M6.6 4.4 L12.2 15.6 H1.2 Z" fill="none" stroke="#5b6b80" stroke-width="2" stroke-linejoin="round"/><path d="M0.8 16.8 H12.6" stroke="#8da0b8" stroke-width="1.2"/><path d="M13 1 L17.4 6.6 M17.4 1 L13 6.6" stroke="#4a5a70" stroke-width="1.5"/></svg>
<div style="left:1266.4px;top:956px;width:1px;height:27px;background:#c4c6d8"></div>
<svg style="left:1276px;top:959.6px" width="22" height="17" viewBox="0 0 22 17"><path d="M10.6 0.4 V9" stroke="#33465e" stroke-width="1.4"/><path d="M7.8 6.4 L10.6 10.4 L13.4 6.4 Z" fill="#33465e"/><rect x="0.7" y="11.4" width="20" height="4.4" rx="2.2" fill="#fbfcfe" stroke="#33465e" stroke-width="1.2"/><rect x="8.4" y="10" width="4.6" height="2.6" fill="#fbfcfe" stroke="#33465e" stroke-width="0.9"/></svg>
<svg style="left:1305.4px;top:957px" width="26" height="23" viewBox="0 0 26 23"><path d="M4.4 3 H12.4 M9.8 0.6 L12.8 3 L9.8 5.4 M11.6 7.8 H19.6 M17 5.4 L20 7.8 L17 10.2" fill="none" stroke="#33465e" stroke-width="1.5"/><path d="M0.8 13 Q5.6 7 11.6 11.4 Q17.6 16 24.6 10.4 V22.2 H0.8 Z" fill="url(#gp)" stroke="#8da0b8" stroke-width="0.7"/><path d="M0.8 13 Q5.6 7 11.6 11.4 Q17.6 16 24.6 10.4" fill="none" stroke="#33465e" stroke-width="1.3"/><path d="M0.8 22.2 H24.6" stroke="#51657f" stroke-width="1"/></svg>
<svg style="left:1340px;top:959.6px" width="22" height="18" viewBox="0 0 22 18"><rect x="2.4" y="0.8" width="16.6" height="5" fill="#51657f" stroke="#33465e" stroke-width="0.8"/><path d="M4.4 5.6 V10 M10.6 5.6 V10 M16.8 5.6 V10" stroke="#33465e" stroke-width="1.5"/><path d="M2.2 8.6 L4.4 11.6 L6.6 8.6 Z M8.4 8.6 L10.6 11.6 L12.8 8.6 Z M14.6 8.6 L16.8 11.6 L19 8.6 Z" fill="#33465e"/><rect x="0.7" y="12.6" width="20" height="4.4" rx="2.2" fill="#fbfcfe" stroke="#33465e" stroke-width="1.2"/><ellipse cx="2.8" cy="14.8" rx="1.2" ry="1.8" fill="#51657f"/></svg>
<div style="left:1370.2px;top:956px;width:1px;height:27px;background:#c4c6d8"></div>
<div style="left:1375.2px;top:952.2px;width:32px;height:31.8px;background:#c9ddf5;border:1.5px solid #3393f3"></div>
<svg style="left:1379.4px;top:956.2px" width="24" height="24" viewBox="0 0 24 24"><path d="M0.6 23 L23.2 0.6" stroke="#d8101c" stroke-width="2.4"/><path d="M11.6 0.4 V23.2" stroke="#d8101c" stroke-width="2.1"/><path d="M11.6 2.6 H20.4 M11.6 5.8 H17.4 M4.8 17.9 H11.6 M1.8 21.2 H11.6" stroke="#d8101c" stroke-width="1.7"/></svg>
<svg style="left:1411.4px;top:957.6px" width="24" height="22" viewBox="0 0 24 22"><path d="M0 3.9 H23.4" stroke="#3b4f68" stroke-width="2.2"/><rect x="9.8" y="0.8" width="5" height="6.2" rx="0.8" fill="#e9eef5" stroke="#33465e" stroke-width="1.5"/><path d="M1.8 7.6 H6.4 M1.8 20.6 H6.4 M4.1 7.6 V20.6" stroke="#33465e" stroke-width="1.5"/></svg>
<div class="t" style="top:965.7px;left:1420.2px;font-size:9.8px;color:#d01020;font-weight:bold">a</div>
<svg style="left:1444px;top:960.6px" width="23" height="14" viewBox="0 0 23 14"><rect x="0.9" y="8.2" width="5.2" height="4.4" rx="0.6" fill="#fff" stroke="#33465e" stroke-width="1.7"/><rect x="16.3" y="8.2" width="5.2" height="4.4" rx="0.6" fill="#fff" stroke="#33465e" stroke-width="1.7"/><path d="M6 4.1 H15 M7.4 1.6 V6.6 M14 1.6 V6.6" stroke="#d01020" stroke-width="1.3"/><path d="M7 1.6 L3.8 4.1 L7 6.6 Z M14.4 1.6 L17.6 4.1 L14.4 6.6 Z" fill="#d01020"/></svg>
<svg style="left:1484.4px;top:958.6px" width="9" height="19" viewBox="0 0 9 19"><path d="M1 0.8 H3 Q7.6 2.4 7.6 9 Q7.6 15.6 3 17.4 H1 Z" fill="#fbfcfe" stroke="#33465e" stroke-width="1.1"/><path d="M3.6 1.6 V16.8" stroke="#8da0b8" stroke-width="0.9"/></svg>
<svg style="left:1506.4px;top:966.8px" width="7" height="4" viewBox="0 0 7 4"><path d="M0 3.6 H6.4 L3.2 0.2 Z" fill="#a89c8c"/></svg>
<svg style="left:1518.6px;top:973.2px" width="10" height="6" viewBox="0 0 10 6"><path d="M0 0 H9.6 L4.8 5.4 Z" fill="#111"/></svg>
<svg style="left:1565.6px;top:956px" width="25" height="24" viewBox="0 0 25 24"><ellipse cx="17.4" cy="9.4" rx="7.6" ry="2.6" fill="#2a2a2a" opacity="0.55" transform="rotate(-24 17.4 9.4)"/><path d="M15 1 L9.4 14" stroke="#33465e" stroke-width="3"/><path d="M14.8 1.8 L9.8 13.4" stroke="#dbe3ee" stroke-width="1.1"/><path d="M9.4 13.6 Q1 13 1.2 18 Q1.6 22.6 10 21.4 Q17 20.4 21.6 16.6" fill="none" stroke="#d83a3a" stroke-width="1"/><path d="M18.6 16 L22 16.2 L20.6 19.4" fill="none" stroke="#d83a3a" stroke-width="1"/></svg>
<svg style="left:1598px;top:956px" width="24" height="24" viewBox="0 0 24 24"><ellipse cx="17.0" cy="9.4" rx="7.6" ry="2.6" fill="#2a2a2a" opacity="0.55" transform="rotate(-24 17.0 9.4)"/><path d="M14.6 1 L9.0 14" stroke="#33465e" stroke-width="3"/><path d="M14.399999999999999 1.8 L9.4 13.4" stroke="#dbe3ee" stroke-width="1.1"/><rect x="0.8" y="13.4" width="10.8" height="10" fill="#fbfbfb" stroke="#d02a2a" stroke-width="1.1"/></svg>
<svg style="left:1629.6px;top:956px" width="24" height="24" viewBox="0 0 24 24"><ellipse cx="17.4" cy="9.4" rx="7.6" ry="2.6" fill="#2a2a2a" opacity="0.55" transform="rotate(-24 17.4 9.4)"/><path d="M15 1 L9.4 14" stroke="#33465e" stroke-width="3"/><path d="M14.8 1.8 L9.8 13.4" stroke="#dbe3ee" stroke-width="1.1"/><circle cx="6.2" cy="18" r="5.4" fill="#f6f6f6" stroke="#d83a3a" stroke-width="1"/></svg>
<div class="t" style="top:964.24px;left:1666.4px;font-size:12px;color:#d01020;font-weight:bold">a</div>
<svg style="left:1675px;top:960px" width="7" height="18" viewBox="0 0 7 18"><path d="M0.6 0.8 H5.4 M0.6 16.6 H5.4 M3 0.8 V16.6" stroke="#33465e" stroke-width="1.3"/></svg>
<div style="left:1693.4px;top:956px;width:1px;height:27px;background:#c4c6d8"></div>
<svg style="left:1705px;top:962px" width="20" height="18" viewBox="0 0 20 18"><rect x="0.6" y="0.6" width="10.8" height="9.6" fill="#e7e3e3" stroke="#8a8a8a" stroke-width="0.9"/><rect x="0.6" y="0.6" width="10.8" height="2" fill="#8a8a8a"/><path d="M10 9 L16.6 15.6" stroke="#33465e" stroke-width="1.6"/><path d="M13.4 16.8 H17.8 V12.4 Z" fill="#33465e"/></svg>
<div class="t" style="top:964.32px;left:1708.6px;font-size:8.6px;color:#d01020;font-weight:bold">a</div>
<svg style="left:1731.6px;top:973.2px" width="10" height="6" viewBox="0 0 10 6"><path d="M0 0 H9.6 L4.8 5.4 Z" fill="#111"/></svg>
<svg style="left:1783px;top:957px" width="20" height="24" viewBox="0 0 20 24"><path d="M4.6 19.6 V2 M4.6 14.4 L16.6 2.4 M4.6 14.4 H17" stroke="#e01020" stroke-width="1.5"/><path d="M2 4.4 L4.6 0.4 L7.2 4.4 Z M13 1.6 L17.8 1.2 L17.4 6 Z M15 11.6 L19 14.4 L15 17.2 Z" fill="#e01020"/><path d="M2.4 9 V21 L5.2 18.4 L7.4 23 L9 22.2 L7 17.6 H10.6 Z" fill="#dfe5ee" stroke="#33465e" stroke-width="1"/></svg>
<svg style="left:1812.6px;top:963px" width="23" height="16" viewBox="0 0 23 16"><path d="M0.8 13 V0.8 H16 V9" fill="url(#gg)" stroke="#a3a3a3" stroke-width="1"/><path d="M0.8 7.4 H8.4 V13" fill="none" stroke="#9a9a9a" stroke-width="1"/><path d="M1.4 13.8 H21.4 M18.6 11.2 L22 13.8 L18.6 16.4" fill="none" stroke="#6e6e6e" stroke-width="1.3"/></svg>
<svg style="left:1845px;top:956px" width="19" height="23" viewBox="0 0 19 23"><path d="M3.6 21.6 V3" stroke="#7a7a7a" stroke-width="1.8"/><path d="M0.6 5.4 L3.6 0.6 L6.6 5.4 Z" fill="#6e6e6e"/><rect x="6.4" y="7.6" width="11" height="14" fill="url(#gg)" stroke="#a6a6a6" stroke-width="0.9"/><path d="M6.4 14 H12 V21.6" fill="none" stroke="#8e8e8e" stroke-width="1.1"/><path d="M3 21.8 H17.4" stroke="#7a7a7a" stroke-width="1.2"/></svg>
<svg style="left:1877px;top:956px" width="24" height="23" viewBox="0 0 24 23"><rect x="0.8" y="7.6" width="13.6" height="14" fill="url(#gg)" stroke="#a3a3a3" stroke-width="1"/><path d="M0.8 14.4 H7.4 V21.6" fill="none" stroke="#9a9a9a" stroke-width="1"/><path d="M1.6 21 L20.6 2.4" stroke="#8a8a8a" stroke-width="1.3"/><path d="M16.6 1 H22.4 V6.8 Z" fill="#7e7e7e"/></svg>
<svg style="left:1904.8px;top:973.2px" width="10" height="6" viewBox="0 0 10 6"><path d="M0 0 H9.6 L4.8 5.4 Z" fill="#111"/></svg>
</body></html>
